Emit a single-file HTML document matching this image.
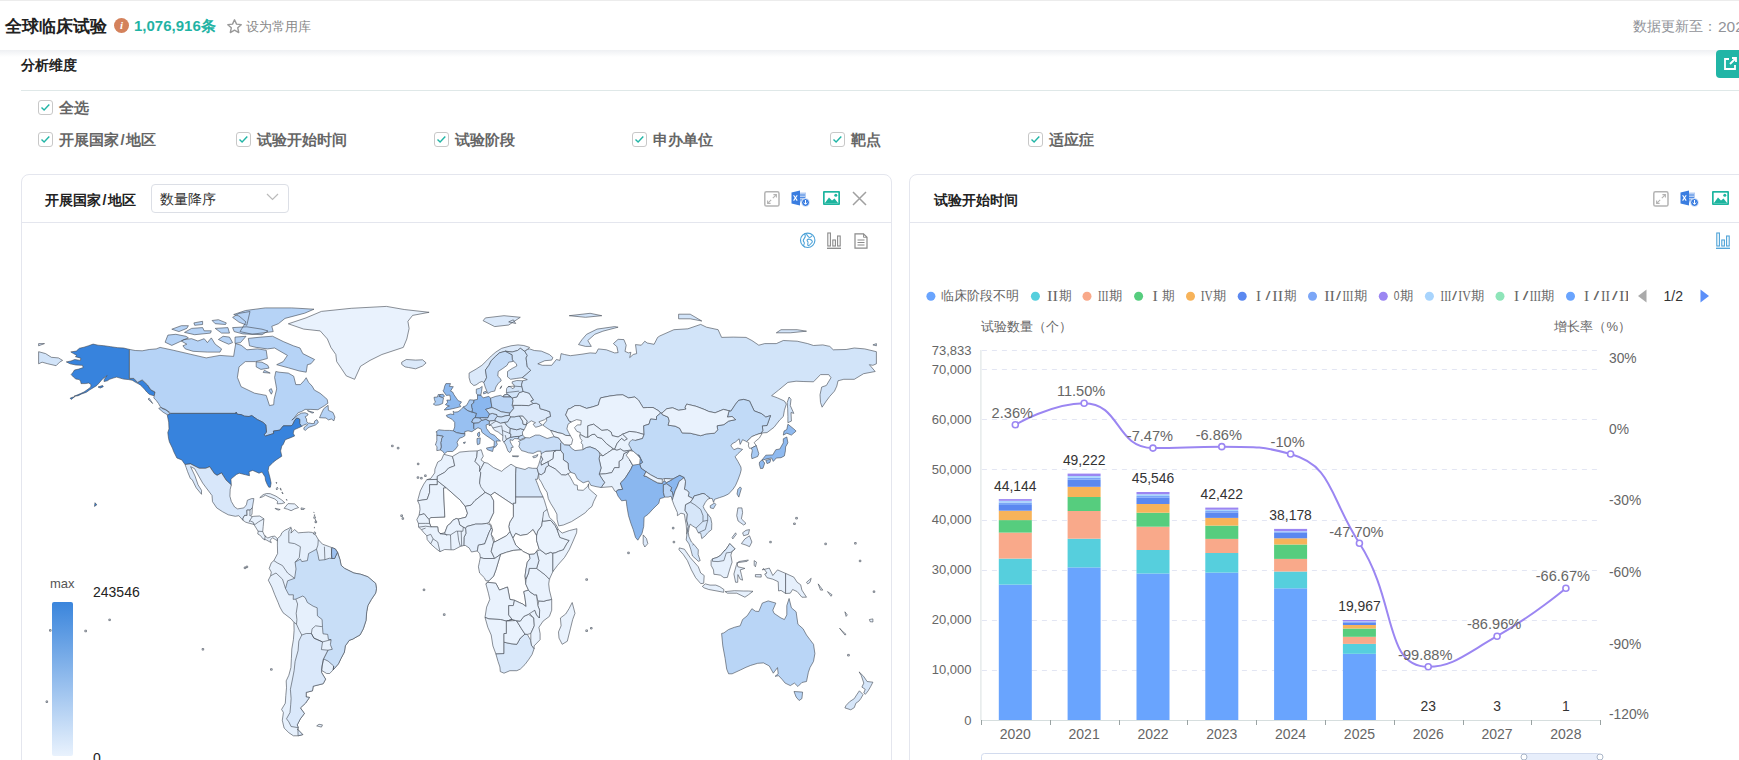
<!DOCTYPE html><html><head><meta charset="utf-8"><style>
*{margin:0;padding:0;box-sizing:border-box}
html,body{width:1739px;height:760px;overflow:hidden;background:#fff;font-family:"Liberation Sans",sans-serif;}
.a{position:absolute;white-space:nowrap}
</style></head><body>
<div class="a" style="left:0;top:0;width:1739px;height:1px;background:#ececec"></div>
<div class="a" style="left:0;top:50px;width:1739px;height:7px;background:linear-gradient(#eef0f3,#fff)"></div>
<div class="a" style="left:5px;top:14px;font-size:17.4px;font-weight:bold;color:#222;line-height:24px">全球临床试验</div>
<div class="a" style="left:114px;top:18px;width:15px;height:15px;border-radius:50%;background:#d4825c;color:#fff;font-size:11px;font-weight:bold;font-style:italic;text-align:center;line-height:15px;font-family:'Liberation Serif',serif">i</div>
<div class="a" style="left:134px;top:16px;font-size:15px;font-weight:bold;color:#1fb3a4;line-height:20px">1,076,916条</div>
<svg class="a" style="left:226px;top:18px" width="17" height="17" viewBox="0 0 24 24"><path d="M12 2.5l2.9 6.2 6.6.7-4.9 4.5 1.4 6.6L12 17.2l-5.9 3.3 1.4-6.6L2.6 9.4l6.6-.7z" fill="none" stroke="#999" stroke-width="2" stroke-linejoin="round"/></svg>
<div class="a" style="left:246px;top:18px;font-size:13px;color:#888;line-height:18px">设为常用库</div>
<div class="a" style="left:1633px;top:18px;font-size:13.8px;color:#919399;line-height:18px">数据更新至：</div>
<div class="a" style="left:1718px;top:17px;font-size:15.5px;color:#919399;line-height:20px">2024-01-01</div>
<div class="a" style="left:21px;top:55px;font-size:14px;font-weight:bold;color:#222;line-height:20px">分析维度</div>
<div class="a" style="left:1716px;top:50px;width:40px;height:28px;border-radius:4px;background:#21b5a6"></div>
<svg class="a" style="left:1721px;top:55px" width="18" height="18" viewBox="0 0 18 18"><path d="M8 4H4v10h10v-4" fill="none" stroke="#fff" stroke-width="1.8"/><path d="M9 9l6-6M11 3h4v4" fill="none" stroke="#fff" stroke-width="1.8"/></svg>
<div class="a" style="left:21px;top:90px;width:1718px;height:1px;background:#dfe8e8"></div>
<div class="a" style="left:38px;top:100px;width:15px;height:15px;border:1px solid #c8c8c8;border-radius:3px;background:#fff"></div>
<svg class="a" style="left:38px;top:100px" width="15" height="15" viewBox="0 0 15 15"><path d="M3.5 7.5l2.6 2.6 5.2-5.6" fill="none" stroke="#21b5a6" stroke-width="1.4"/></svg>
<div class="a" style="left:59px;top:97px;font-size:15px;color:#666;line-height:21px;font-weight:bold">全选</div>
<div class="a" style="left:38px;top:132px;width:15px;height:15px;border:1px solid #c8c8c8;border-radius:3px;background:#fff"></div>
<svg class="a" style="left:38px;top:132px" width="15" height="15" viewBox="0 0 15 15"><path d="M3.5 7.5l2.6 2.6 5.2-5.6" fill="none" stroke="#21b5a6" stroke-width="1.4"/></svg>
<div class="a" style="left:59px;top:129px;font-size:15px;color:#666;line-height:21px;font-weight:bold">开展国家<span style="margin:0 1.6px">/</span>地区</div>
<div class="a" style="left:236px;top:132px;width:15px;height:15px;border:1px solid #c8c8c8;border-radius:3px;background:#fff"></div>
<svg class="a" style="left:236px;top:132px" width="15" height="15" viewBox="0 0 15 15"><path d="M3.5 7.5l2.6 2.6 5.2-5.6" fill="none" stroke="#21b5a6" stroke-width="1.4"/></svg>
<div class="a" style="left:257px;top:129px;font-size:15px;color:#666;line-height:21px;font-weight:bold">试验开始时间</div>
<div class="a" style="left:434px;top:132px;width:15px;height:15px;border:1px solid #c8c8c8;border-radius:3px;background:#fff"></div>
<svg class="a" style="left:434px;top:132px" width="15" height="15" viewBox="0 0 15 15"><path d="M3.5 7.5l2.6 2.6 5.2-5.6" fill="none" stroke="#21b5a6" stroke-width="1.4"/></svg>
<div class="a" style="left:455px;top:129px;font-size:15px;color:#666;line-height:21px;font-weight:bold">试验阶段</div>
<div class="a" style="left:632px;top:132px;width:15px;height:15px;border:1px solid #c8c8c8;border-radius:3px;background:#fff"></div>
<svg class="a" style="left:632px;top:132px" width="15" height="15" viewBox="0 0 15 15"><path d="M3.5 7.5l2.6 2.6 5.2-5.6" fill="none" stroke="#21b5a6" stroke-width="1.4"/></svg>
<div class="a" style="left:653px;top:129px;font-size:15px;color:#666;line-height:21px;font-weight:bold">申办单位</div>
<div class="a" style="left:830px;top:132px;width:15px;height:15px;border:1px solid #c8c8c8;border-radius:3px;background:#fff"></div>
<svg class="a" style="left:830px;top:132px" width="15" height="15" viewBox="0 0 15 15"><path d="M3.5 7.5l2.6 2.6 5.2-5.6" fill="none" stroke="#21b5a6" stroke-width="1.4"/></svg>
<div class="a" style="left:851px;top:129px;font-size:15px;color:#666;line-height:21px;font-weight:bold">靶点</div>
<div class="a" style="left:1028px;top:132px;width:15px;height:15px;border:1px solid #c8c8c8;border-radius:3px;background:#fff"></div>
<svg class="a" style="left:1028px;top:132px" width="15" height="15" viewBox="0 0 15 15"><path d="M3.5 7.5l2.6 2.6 5.2-5.6" fill="none" stroke="#21b5a6" stroke-width="1.4"/></svg>
<div class="a" style="left:1049px;top:129px;font-size:15px;color:#666;line-height:21px;font-weight:bold">适应症</div>
<div class="a" style="left:21px;top:174px;width:871px;height:600px;border:1px solid #e4e6ee;border-radius:8px"></div>
<div class="a" style="left:22px;top:222px;width:869px;height:1px;background:#e4e6ee"></div>
<div class="a" style="left:909px;top:174px;width:900px;height:600px;border:1px solid #e4e6ee;border-radius:8px"></div>
<div class="a" style="left:910px;top:222px;width:829px;height:1px;background:#e4e6ee"></div>
<div class="a" style="left:45px;top:190px;font-size:14px;font-weight:bold;color:#222;line-height:20px">开展国家<span style="margin:0 1.6px">/</span>地区</div>
<div class="a" style="left:934px;top:190px;font-size:14px;font-weight:bold;color:#222;line-height:20px">试验开始时间</div>
<div class="a" style="left:151px;top:184px;width:138px;height:29px;border:1px solid #dcdfe6;border-radius:4px"></div>
<div class="a" style="left:160px;top:189px;font-size:14px;color:#333;line-height:20px">数量降序</div>
<svg class="a" style="left:266px;top:193px" width="13" height="8" viewBox="0 0 13 8"><path d="M1 1l5.5 5.5L12 1" fill="none" stroke="#bbb" stroke-width="1.2"/></svg>
<svg class="a" style="left:764px;top:191px" width="16" height="16" viewBox="0 0 16 16"><rect x="0.8" y="0.8" width="14.2" height="14.2" rx="1.6" fill="none" stroke="#b4b4b4" stroke-width="1.5"/><path d="M8.8 7.2L12.2 3.8M9.4 3.6h3v3M7.2 8.8L3.8 12.2M3.6 9.4v3h3" fill="none" stroke="#b4b4b4" stroke-width="1.1"/></svg>
<svg class="a" style="left:791px;top:190px" width="19" height="17" viewBox="0 0 19 17"><rect x="8" y="2.5" width="7" height="10" fill="#b5cdf3"/><path d="M9 5h5M9 7.5h5M9 10h5" stroke="#3a7de0" stroke-width="0.8"/><path d="M0.5 2.5L9 0.5v15L0.5 13.5z" fill="#3a7de0"/><path d="M2.6 5.2l3.6 5.4M6.2 5.2l-3.6 5.4" stroke="#fff" stroke-width="1.1"/><circle cx="14.5" cy="12.5" r="4" fill="#3a7de0" stroke="#fff" stroke-width="0.8"/><path d="M14.5 10v4.2M12.8 12.6l1.7 1.7 1.7-1.7" stroke="#fff" stroke-width="1" fill="none"/></svg>
<svg class="a" style="left:823px;top:191px" width="17" height="15" viewBox="0 0 17 15"><rect x="0" y="0" width="17" height="14" rx="1" fill="#1db59f"/><rect x="1.7" y="1.7" width="13.6" height="10.6" fill="#fff"/><path d="M1.7 12.3L6 6.5l3 3 2.5-2 3.8 4.8z" fill="#1db59f"/><circle cx="12.8" cy="4.3" r="1.5" fill="#1db59f"/></svg>
<svg class="a" style="left:852px;top:191px" width="15" height="15" viewBox="0 0 15 15"><path d="M1 1l13 13M14 1L1 14" stroke="#a0a0a0" stroke-width="1.5"/></svg>
<svg class="a" style="left:1653px;top:191px" width="16" height="16" viewBox="0 0 16 16"><rect x="0.8" y="0.8" width="14.2" height="14.2" rx="1.6" fill="none" stroke="#b4b4b4" stroke-width="1.5"/><path d="M8.8 7.2L12.2 3.8M9.4 3.6h3v3M7.2 8.8L3.8 12.2M3.6 9.4v3h3" fill="none" stroke="#b4b4b4" stroke-width="1.1"/></svg>
<svg class="a" style="left:1680px;top:190px" width="19" height="17" viewBox="0 0 19 17"><rect x="8" y="2.5" width="7" height="10" fill="#b5cdf3"/><path d="M9 5h5M9 7.5h5M9 10h5" stroke="#3a7de0" stroke-width="0.8"/><path d="M0.5 2.5L9 0.5v15L0.5 13.5z" fill="#3a7de0"/><path d="M2.6 5.2l3.6 5.4M6.2 5.2l-3.6 5.4" stroke="#fff" stroke-width="1.1"/><circle cx="14.5" cy="12.5" r="4" fill="#3a7de0" stroke="#fff" stroke-width="0.8"/><path d="M14.5 10v4.2M12.8 12.6l1.7 1.7 1.7-1.7" stroke="#fff" stroke-width="1" fill="none"/></svg>
<svg class="a" style="left:1712px;top:191px" width="17" height="15" viewBox="0 0 17 15"><rect x="0" y="0" width="17" height="14" rx="1" fill="#1db59f"/><rect x="1.7" y="1.7" width="13.6" height="10.6" fill="#fff"/><path d="M1.7 12.3L6 6.5l3 3 2.5-2 3.8 4.8z" fill="#1db59f"/><circle cx="12.8" cy="4.3" r="1.5" fill="#1db59f"/></svg>
<svg class="a" style="left:799px;top:232px" width="18" height="18" viewBox="0 0 18 18"><circle cx="8.7" cy="8.3" r="7.2" fill="none" stroke="#4ea3d8" stroke-width="1.15"/><path d="M5.5 1.5C6.5 3 6.6 4.8 5.3 6.3S3.6 8.8 5 10.2S4.2 12.8 4.6 13.6L5.6 15.2M7.1 1.2C7.8 2.8 8.6 4.2 9.8 5.2S12 4.6 13.2 3.6M8.06 8.0C8.8 7.2 9.8 7 10.6 7.2S12.8 8 13.3 9.2S12.4 11 11.8 11.8S10.2 13.6 9.5 13.6S8.6 12.6 8.8 11.8S9.2 10.2 8.9 9.8S8 8.8 8.06 8.0z" fill="none" stroke="#4ea3d8" stroke-width="1.05"/></svg>
<svg class="a" style="left:826px;top:232px" width="16" height="17" viewBox="0 0 16 17"><path d="M1 16.3h14" stroke="#8a8a8a" stroke-width="1.3"/><rect x="1.8" y="1" width="2.6" height="13" fill="none" stroke="#8a8a8a" stroke-width="1.1"/><rect x="6.8" y="8" width="2.6" height="6" fill="none" stroke="#8a8a8a" stroke-width="1.1"/><rect x="11.6" y="4" width="2.6" height="10" fill="none" stroke="#8a8a8a" stroke-width="1.1"/></svg>
<svg class="a" style="left:1715px;top:232px" width="16" height="17" viewBox="0 0 16 17"><path d="M1 16.3h14" stroke="#4ea3d8" stroke-width="1.3"/><rect x="1.8" y="1" width="2.6" height="13" fill="none" stroke="#4ea3d8" stroke-width="1.1"/><rect x="6.8" y="8" width="2.6" height="6" fill="none" stroke="#4ea3d8" stroke-width="1.1"/><rect x="11.6" y="4" width="2.6" height="10" fill="none" stroke="#4ea3d8" stroke-width="1.1"/></svg>
<svg class="a" style="left:854px;top:233px" width="14" height="16" viewBox="0 0 14 16"><path d="M1 .8h8.5L13 4.3v10.9H1z" fill="none" stroke="#8a8a8a" stroke-width="1.2"/><path d="M9.5 .8v3.5H13" fill="none" stroke="#8a8a8a" stroke-width="0.9"/><path d="M3.5 7h7M3.5 9.5h7M3.5 12h7" stroke="#8a8a8a" stroke-width="1.1"/></svg>
<svg class="a" style="left:0;top:0;pointer-events:none" width="1739" height="760" viewBox="0 0 1739 760">
<g stroke="#444a55" stroke-width="0.62" stroke-linejoin="round">
<path d="M443.8 454.3 L452.4 456.5 L453.5 459.9 L454.7 465.8 L448.7 468.0 L444.7 472.3 L437.3 476.3 L437.3 479.4 L426.8 479.7 L430.7 478.5 L434.7 472.9 L434.9 469.2 L437.7 462.1 L441.4 459.9Z" fill="#e9f2fd"/>
<path d="M437.3 479.4 L437.3 484.7 L429.6 484.7 L429.6 492.4 L427.2 499.3 L417.7 500.8 L418.2 498.6 L420.3 490.9 L423.8 484.1 L426.8 479.7Z" fill="#e9f2fd"/>
<path d="M417.7 500.8 L427.2 499.3 L429.6 492.4 L429.6 484.7 L437.3 484.7 L437.3 480.7 L446.3 487.8 L443.5 488.1 L444.7 514.1 L444.9 517.2 L430.7 517.6 L429.1 519.7 L424.2 513.8 L419.1 515.1 L420.0 509.5 L419.6 505.2Z" fill="#e9f2fd"/>
<path d="M429.1 519.7 L430.7 517.6 L444.9 517.2 L444.7 514.1 L443.5 488.1 L446.3 487.8 L460.3 500.2 L465.2 506.4 L467.5 513.2 L465.9 517.2 L458.2 519.1 L456.3 518.5 L452.8 520.3 L450.5 523.4 L447.5 525.6 L444.7 533.1 L440.0 533.7 L438.2 531.2 L437.7 526.9 L431.0 526.9 L429.6 523.4Z" fill="#ffffff"/>
<path d="M452.4 456.5 L459.8 452.1 L469.1 451.2 L477.3 450.9 L476.8 456.8 L475.0 461.4 L479.6 466.1 L480.8 472.3 L479.6 483.1 L485.2 492.4 L475.0 500.5 L471.0 505.2 L465.2 506.4 L460.3 500.2 L446.3 487.8 L437.3 480.7 L437.3 476.3 L444.7 472.3 L448.7 468.0 L454.7 465.8 L453.5 459.9Z" fill="#e9f2fd"/>
<path d="M477.3 450.9 L481.2 449.7 L483.3 456.2 L481.0 459.9 L484.3 462.4 L481.5 467.6 L479.6 471.4 L479.6 466.1 L475.0 461.4 L476.8 456.8Z" fill="#e9f2fd"/>
<path d="M484.3 462.4 L487.8 463.3 L493.6 467.6 L501.7 471.4 L504.0 469.2 L511.0 464.2 L516.1 467.3 L515.7 473.8 L515.7 497.1 L515.7 503.3 L513.3 503.3 L513.3 504.8 L494.7 492.4 L490.5 495.2 L485.2 492.4 L480.8 486.9 L479.6 483.1 L480.8 472.3 L479.6 471.4 L481.5 467.6Z" fill="#e9f2fd"/>
<path d="M516.1 467.3 L525.0 469.5 L528.5 467.6 L532.7 468.3 L537.1 468.3 L538.7 473.8 L537.3 479.4 L535.5 479.1 L537.8 484.7 L540.1 490.9 L543.1 497.1 L515.7 497.1 L515.7 473.8Z" fill="#d6e6f9"/>
<path d="M515.7 497.1 L543.1 497.1 L544.3 500.2 L547.1 509.5 L544.8 512.6 L542.4 521.0 L541.7 525.9 L537.8 531.2 L536.6 535.8 L533.1 529.6 L527.3 534.3 L520.3 535.5 L515.7 533.4 L512.9 538.3 L509.9 531.8 L508.7 526.5 L509.9 521.9 L513.3 516.6 L513.3 504.8 L513.3 503.3 L515.7 503.3Z" fill="#e9f2fd"/>
<path d="M536.6 535.8 L536.6 540.5 L538.9 548.2 L536.6 551.3 L534.3 554.1 L529.2 554.4 L522.7 551.3 L520.3 549.2 L515.7 545.1 L512.9 538.3 L515.7 533.4 L520.3 535.5 L527.3 534.3 L533.1 529.6Z" fill="#ffffff"/>
<path d="M490.5 495.2 L494.7 492.4 L513.3 504.8 L513.3 516.6 L509.9 521.9 L508.7 526.5 L509.9 531.8 L506.4 535.8 L500.5 538.9 L494.7 542.0 L493.6 538.0 L491.2 534.3 L492.4 529.6 L491.2 525.0 L488.9 522.5 L493.6 512.6 L493.6 500.8Z" fill="#ffffff"/>
<path d="M465.9 517.2 L467.5 513.2 L465.2 506.4 L471.0 505.2 L475.0 500.5 L485.2 492.4 L490.5 495.2 L493.6 500.8 L493.6 512.6 L488.9 522.5 L486.6 523.4 L481.9 524.1 L475.7 524.1 L466.8 526.5 L465.6 528.4 L463.3 527.2 L459.8 525.0 L458.2 519.1Z" fill="#e9f2fd"/>
<path d="M463.8 545.5 L465.4 545.5 L469.1 547.9 L471.5 552.0 L475.0 551.3 L477.3 551.0 L478.4 545.1 L484.7 543.9 L486.6 538.9 L488.9 532.8 L491.2 528.1 L490.1 524.7 L486.6 523.4 L481.9 524.1 L475.7 524.1 L466.8 526.5 L465.6 528.4 L465.9 533.4 L464.0 537.4Z" fill="#e3eefc"/>
<path d="M477.3 551.0 L479.8 553.8 L480.3 557.5 L483.8 558.5 L494.7 558.5 L491.2 551.3 L492.4 546.7 L493.6 542.0 L491.2 534.3 L492.4 529.6 L491.2 528.1 L488.9 532.8 L486.6 538.9 L484.7 543.9 L478.4 545.1Z" fill="#e9f2fd"/>
<path d="M491.2 551.3 L494.7 558.5 L500.5 554.4 L506.4 552.3 L513.3 550.4 L521.5 549.8 L520.3 549.2 L515.7 545.1 L512.9 538.3 L509.9 531.8 L506.4 535.8 L500.5 538.9 L494.7 542.0 L493.6 542.0 L492.4 546.7Z" fill="#e9f2fd"/>
<path d="M485.9 583.9 L487.8 582.3 L495.9 583.3 L499.4 590.1 L507.5 587.0 L509.9 599.4 L514.5 600.3 L519.2 602.5 L522.7 604.0 L526.1 606.5 L525.0 597.8 L523.8 591.6 L528.5 590.1 L525.7 583.9 L525.0 576.1 L526.1 568.4 L527.3 562.2 L530.1 558.5 L529.2 554.4 L522.7 551.3 L521.5 549.8 L513.3 550.4 L506.4 552.3 L500.5 554.4 L498.2 562.2 L495.9 569.9 L493.6 576.1 L488.9 580.8Z" fill="#ffffff"/>
<path d="M480.3 557.5 L479.4 562.2 L478.4 566.8 L479.6 573.0 L484.3 577.7 L485.9 580.8 L488.9 580.8 L493.6 576.1 L495.9 569.9 L498.2 562.2 L500.5 554.4 L494.7 558.5 L483.8 558.5Z" fill="#e9f2fd"/>
<path d="M485.9 583.9 L488.4 593.2 L489.8 599.4 L486.6 607.1 L485.0 617.4 L488.9 618.9 L500.5 619.5 L506.4 621.1 L512.2 619.5 L508.7 614.9 L508.7 605.6 L513.3 605.6 L514.5 600.3 L509.9 599.4 L507.5 587.0 L499.4 590.1 L495.9 583.3 L487.8 582.3Z" fill="#e9f2fd"/>
<path d="M485.0 617.4 L487.8 627.3 L491.2 635.0 L492.9 645.9 L495.9 654.0 L504.0 653.6 L504.0 642.2 L504.0 633.5 L506.4 633.5 L506.4 621.1 L512.2 619.5 L515.7 620.5 L512.2 619.5 L506.4 621.1 L500.5 619.5 L488.9 618.9Z" fill="#e9f2fd"/>
<path d="M495.9 654.0 L498.0 661.4 L499.9 667.0 L500.3 671.6 L504.0 673.2 L509.9 670.7 L516.8 670.7 L520.3 669.1 L525.0 664.5 L528.5 659.8 L532.0 654.6 L534.1 648.7 L531.5 645.3 L530.8 640.6 L527.3 634.4 L525.0 634.1 L520.3 638.1 L516.8 644.3 L511.0 643.7 L504.0 642.2 L504.0 653.6Z" fill="#d9e8fa"/>
<path d="M504.0 642.2 L511.0 643.7 L516.8 644.3 L520.3 638.1 L525.0 634.1 L521.5 628.8 L516.8 621.1 L515.7 620.5 L506.4 621.1 L506.4 633.5 L504.0 633.5Z" fill="#e9f2fd"/>
<path d="M516.8 621.1 L521.5 628.8 L525.0 634.1 L527.3 634.4 L530.8 633.5 L534.3 625.8 L533.8 618.0 L528.5 614.3 L523.8 616.4 L520.3 621.1Z" fill="#e9f2fd"/>
<path d="M530.8 640.6 L531.5 645.3 L534.1 648.7 L534.1 645.9 L540.1 639.7 L540.1 633.5 L538.9 627.3 L543.1 621.1 L549.4 616.4 L551.7 610.2 L551.7 599.4 L547.1 600.3 L543.6 601.3 L538.9 600.9 L537.8 605.6 L539.6 610.2 L539.4 618.0 L536.6 614.9 L534.8 610.2 L528.5 612.4 L533.8 618.0 L534.3 625.8 L530.8 633.5Z" fill="#e9f2fd"/>
<path d="M508.7 605.6 L508.7 614.9 L512.2 619.5 L515.7 620.5 L520.3 621.1 L523.8 616.4 L528.5 614.3 L534.8 610.2 L536.6 614.9 L539.4 618.0 L539.6 610.2 L537.8 605.6 L536.6 594.8 L534.3 594.8 L529.6 591.6 L528.5 590.1 L523.8 591.6 L525.0 597.8 L526.1 606.5 L522.7 604.0 L519.2 602.5 L514.5 600.3 L513.3 605.6Z" fill="#e9f2fd"/>
<path d="M525.7 583.9 L528.5 590.1 L529.6 591.6 L534.3 594.8 L536.6 594.8 L537.8 600.9 L538.9 600.9 L543.6 601.3 L547.1 600.3 L551.7 599.4 L549.4 590.1 L548.7 583.9 L549.4 579.2 L545.2 574.9 L536.6 568.4 L529.2 568.4 L528.5 573.0 L526.1 579.2Z" fill="#e9f2fd"/>
<path d="M536.6 568.4 L545.2 574.9 L549.4 579.2 L552.9 571.5 L552.9 553.2 L550.6 552.3 L545.9 554.1 L540.1 549.8 L536.6 551.3 L538.9 560.6Z" fill="#e9f2fd"/>
<path d="M529.2 568.4 L536.6 568.4 L538.9 560.6 L536.6 551.3 L534.3 554.1 L529.2 554.4 L530.1 558.5 L527.3 562.2 L526.1 568.4 L525.0 576.1 L525.7 579.2 L528.5 573.0Z" fill="#e3eefc"/>
<path d="M536.6 540.5 L536.6 535.8 L537.8 531.2 L541.7 525.9 L542.4 521.0 L544.8 521.0 L550.6 520.3 L555.2 525.6 L557.1 529.6 L559.9 537.4 L569.2 540.5 L566.9 543.6 L563.4 549.8 L558.7 551.3 L555.2 552.9 L552.9 553.2 L550.6 552.3 L545.9 554.1 L540.1 549.8 L538.9 548.2Z" fill="#e9f2fd"/>
<path d="M542.4 521.0 L543.6 512.0 L547.1 509.5 L549.4 517.2 L554.1 521.9 L557.1 526.5 L558.3 529.6 L557.1 529.6 L555.2 525.6 L550.6 520.3 L544.8 521.0Z" fill="#e9f2fd"/>
<path d="M552.9 571.5 L557.6 565.3 L564.5 557.5 L569.2 549.8 L572.7 542.0 L576.6 532.8 L576.9 528.7 L569.2 530.6 L562.2 533.1 L558.3 529.6 L557.1 529.6 L559.9 537.4 L569.2 540.5 L566.9 543.6 L563.4 549.8 L558.7 551.3 L555.2 552.9 L552.9 553.2Z" fill="#e9f2fd"/>
<path d="M419.1 515.1 L424.2 513.8 L429.1 519.7 L429.6 523.4 L431.0 526.9 L437.7 526.9 L438.2 531.2 L440.0 533.7 L444.7 533.1 L447.5 525.6 L450.5 523.4 L452.8 520.3 L456.3 518.5 L458.2 519.1 L459.8 525.0 L463.3 527.2 L465.6 528.4 L465.9 533.4 L464.0 537.4 L463.8 545.5 L460.3 546.4 L454.0 549.8 L450.5 549.8 L444.7 549.5 L440.0 551.7 L435.4 548.2 L430.7 543.9 L427.2 539.6 L426.8 535.8 L423.3 532.1 L421.4 529.6 L418.6 527.2 L418.4 523.4 L416.8 519.7Z" fill="#e9f2fd"/>
<path d="M572.2 602.5 L575.0 613.3 L572.7 619.5 L570.4 628.8 L567.3 641.2 L562.2 644.3 L559.0 638.1 L558.5 631.9 L561.1 625.8 L560.4 618.0 L565.7 614.0 L569.0 608.7Z" fill="#e9f2fd"/>
<path d="M277.4 540.8 L277.4 538.6 L280.6 535.8 L281.8 532.8 L284.8 530.3 L289.5 528.1 L290.7 526.9 L291.8 529.6 L290.9 533.1 L294.6 529.6 L298.3 532.8 L303.9 532.4 L308.6 532.1 L312.1 532.4 L315.6 534.9 L318.3 539.6 L322.5 544.2 L329.5 546.7 L335.3 548.9 L337.7 552.3 L340.0 559.7 L341.1 565.3 L344.6 568.4 L353.9 573.0 L360.9 574.3 L367.9 576.8 L375.6 583.3 L376.5 588.5 L375.6 593.2 L371.4 599.4 L367.9 605.6 L366.7 611.8 L366.0 620.5 L363.3 628.8 L360.0 635.0 L357.0 636.6 L352.8 639.1 L349.3 640.3 L345.3 645.9 L344.4 652.1 L341.1 658.3 L338.4 663.9 L333.2 669.8 L329.7 673.5 L326.7 673.5 L321.6 670.4 L321.6 672.6 L324.2 676.9 L325.6 679.1 L323.2 683.7 L313.2 686.2 L312.5 690.8 L306.2 692.4 L306.2 697.0 L309.5 697.4 L305.5 703.2 L300.4 707.9 L304.4 713.5 L300.4 718.8 L297.2 724.9 L298.3 727.7 L297.9 729.6 L302.8 734.6 L298.1 735.8 L293.4 735.8 L288.8 732.7 L284.1 728.0 L282.3 720.3 L283.4 712.5 L281.6 709.4 L285.3 703.2 L285.8 695.5 L286.5 687.8 L286.2 680.9 L288.8 675.3 L290.9 667.6 L291.4 658.3 L291.8 649.0 L293.4 639.7 L294.1 630.4 L293.9 622.3 L291.1 618.9 L283.0 612.7 L279.9 607.1 L278.1 602.5 L274.8 594.8 L271.8 587.0 L268.3 580.2 L270.6 575.8 L271.3 572.1 L269.2 568.4 L271.3 562.8 L273.9 560.6 L277.6 553.5 L277.4 545.1ZM319.0 724.3 L322.5 724.9 L321.4 727.1 L316.7 725.9Z" fill="#e6f0fc"/>
<path d="M337.4 552.3 L340.0 559.7 L341.1 565.3 L344.6 568.4 L353.9 573.0 L360.9 574.3 L367.9 576.8 L375.6 583.3 L376.5 588.5 L375.6 593.2 L371.4 599.4 L367.9 605.6 L366.7 611.8 L366.0 620.5 L363.3 628.8 L360.0 635.0 L357.0 636.6 L352.8 639.1 L349.3 640.3 L345.3 645.9 L344.4 652.1 L341.1 658.3 L338.4 663.9 L333.2 669.8 L333.7 666.0 L328.1 661.1 L323.5 658.9 L327.9 650.2 L332.3 649.3 L330.4 644.7 L331.1 639.7 L328.4 639.4 L327.7 634.4 L323.0 633.8 L322.5 627.3 L322.1 619.5 L317.4 615.8 L317.2 607.8 L313.2 606.2 L307.4 602.5 L305.3 597.8 L302.8 596.0 L295.8 599.1 L293.2 599.4 L293.4 594.8 L288.8 594.8 L285.5 588.5 L287.6 580.8 L294.6 578.3 L296.0 569.0 L295.1 562.2 L300.4 559.1 L301.8 561.6 L307.4 560.6 L308.6 553.5 L316.5 549.2 L317.9 554.4 L319.0 560.3 L324.9 559.7 L329.5 558.2 L331.8 558.5 L334.6 558.5Z" fill="#c8def7"/>
<path d="M321.6 670.4 L321.6 672.6 L324.2 676.9 L325.6 679.1 L323.2 683.7 L313.2 686.2 L312.5 690.8 L306.2 692.4 L306.2 697.0 L309.5 697.4 L305.5 703.2 L300.4 707.9 L304.4 713.5 L300.4 718.8 L297.2 724.9 L298.3 727.7 L291.1 726.5 L288.8 721.8 L286.5 718.8 L290.0 712.5 L290.7 704.8 L291.1 698.6 L290.4 689.3 L292.3 680.0 L294.1 670.7 L295.1 661.4 L298.1 650.5 L298.8 641.2 L301.8 635.0 L306.2 633.5 L311.4 633.5 L313.9 638.1 L322.5 641.9 L321.4 649.6 L327.9 650.2 L323.5 658.9 L322.1 666.0ZM297.9 729.6 L302.8 734.6 L298.1 735.8 L297.9 728.7Z" fill="#dae8fa"/>
<path d="M331.8 547.6 L335.3 548.9 L337.4 552.3 L334.6 558.5 L331.8 558.5 L331.4 554.4Z" fill="#9dc1f0"/>
<path d="M129.4 349.4 L123.6 348.0 L117.8 347.7 L110.8 346.7 L103.8 345.7 L98.0 345.2 L93.1 344.1 L88.7 345.7 L84.0 347.2 L79.4 348.3 L76.3 351.1 L70.8 351.9 L73.5 353.6 L76.8 355.4 L75.4 356.7 L80.8 358.2 L80.5 360.4 L74.7 359.5 L71.0 361.0 L66.3 361.9 L70.1 363.8 L75.9 365.0 L82.4 365.3 L83.3 367.5 L78.7 369.1 L74.5 370.0 L73.1 372.2 L71.2 374.6 L73.5 377.1 L75.9 379.0 L79.4 379.6 L80.8 381.8 L81.0 383.6 L85.2 383.6 L88.7 383.0 L91.0 384.6 L90.8 387.0 L88.0 389.2 L84.0 392.0 L80.5 393.6 L77.0 395.1 L74.0 396.3 L78.2 395.7 L81.7 393.9 L86.3 392.3 L89.8 389.8 L93.3 387.7 L96.8 385.5 L99.1 383.0 L101.0 380.8 L103.1 378.4 L105.0 377.1 L107.1 375.6 L104.3 379.3 L104.0 381.5 L107.3 380.8 L109.6 379.3 L113.1 378.1 L116.6 377.1 L120.1 378.1 L123.6 379.1 L128.2 379.5 L132.2 380.2 L135.2 382.1 L138.0 383.6 L140.3 384.9 L142.2 386.7 L144.5 389.2 L146.8 392.0 L149.2 394.2 L151.5 395.1 L154.3 395.7 L155.0 392.0 L150.8 389.8 L147.5 384.9 L142.2 379.9 L137.5 382.4 L133.8 378.4 L129.4 378.4ZM70.1 398.2 L72.4 397.3 L74.7 396.7 L71.2 399.4ZM100.3 388.0 L103.3 386.7 L102.6 385.5 L98.0 387.0Z" fill="#3783dd"/>
<path d="M129.4 349.4 L129.4 378.4 L133.8 378.4 L137.5 382.4 L142.2 379.9 L147.5 384.9 L150.8 389.8 L155.0 392.0 L154.3 395.7 L153.8 397.9 L156.2 400.4 L158.5 403.5 L160.1 406.3 L162.0 408.4 L166.6 410.3 L169.0 411.8 L170.8 413.4 L236.1 413.4 L236.1 412.2 L237.4 414.3 L241.1 414.6 L244.6 416.2 L249.0 416.5 L251.8 415.6 L257.4 419.6 L260.6 421.1 L263.0 422.4 L265.8 424.9 L266.5 432.0 L264.1 434.8 L265.5 436.0 L273.7 433.5 L273.4 431.1 L279.9 430.1 L283.0 426.1 L283.7 425.8 L291.1 425.8 L292.7 424.6 L294.6 420.5 L296.5 418.2 L298.6 418.5 L299.7 419.3 L299.7 423.6 L301.6 426.4 L303.5 425.2 L306.7 423.9 L307.6 424.9 L304.4 427.0 L303.7 429.2 L305.3 430.4 L307.9 428.0 L309.7 427.0 L313.2 425.8 L315.6 424.9 L317.9 423.0 L318.3 422.1 L316.9 419.6 L314.6 421.1 L314.4 423.3 L312.1 423.6 L309.0 423.0 L308.1 423.3 L306.7 421.5 L306.5 419.0 L305.1 416.8 L307.4 415.6 L308.1 414.0 L305.1 412.8 L301.6 413.1 L298.1 414.9 L291.8 420.2 L294.6 417.4 L298.1 412.8 L301.6 411.5 L305.1 409.4 L310.9 409.4 L317.9 409.7 L324.6 405.6 L327.9 403.2 L327.2 399.4 L323.7 396.3 L320.0 393.2 L314.4 390.1 L312.1 386.1 L308.6 382.4 L306.2 377.7 L304.2 380.5 L300.4 384.6 L295.8 384.6 L293.7 376.2 L288.3 373.1 L279.0 372.2 L275.8 371.5 L274.6 377.4 L276.7 388.9 L274.1 399.4 L273.7 404.7 L269.5 405.6 L266.2 395.4 L254.6 393.2 L241.1 386.7 L237.4 377.4 L239.0 366.9 L245.3 361.6 L255.7 361.6 L267.4 358.5 L266.2 350.2 L257.4 348.9 L246.9 349.8 L241.1 345.2 L235.7 343.6 L233.6 356.4 L219.9 355.4 L206.2 357.9 L189.0 353.9 L173.1 350.2 L160.1 347.4 L156.2 348.9 L149.2 349.5 L142.2 350.8 L135.2 350.5ZM170.6 415.3 L167.1 414.6 L163.1 412.2 L158.7 408.4 L160.8 407.5 L165.5 409.4 L169.0 412.5ZM165.1 342.2 L167.9 335.1 L175.8 334.3 L186.0 336.3 L188.4 337.9 L181.3 341.0 L171.8 345.4ZM181.3 341.0 L183.7 339.5 L191.6 338.7 L197.9 341.0 L204.2 338.7 L207.4 342.6 L211.3 337.9 L215.2 344.2 L221.6 348.9 L220.0 352.1 L207.4 352.1 L193.1 351.3 L185.3 348.9 L182.9 345.8 L186.8 344.2ZM218.4 339.5 L223.1 336.3 L229.5 337.1 L232.6 342.6 L228.7 344.2 L223.1 341.8ZM235.0 337.1 L246.0 336.3 L240.5 342.6 L235.0 343.4ZM171.8 329.2 L181.3 325.7 L188.4 325.7 L186.8 328.4 L178.9 331.6ZM184.5 332.4 L191.6 328.4 L202.6 327.6 L204.2 330.8 L211.3 330.8 L210.5 333.1 L194.7 334.7ZM193.9 322.9 L202.6 321.3 L202.6 324.5 L194.7 325.3ZM212.1 320.5 L218.4 319.7 L226.3 322.9 L225.5 324.5 L215.2 323.7ZM215.2 328.4 L227.9 327.6 L229.5 333.1 L221.6 333.1ZM232.6 327.6 L246.8 326.8 L262.0 329.2 L268.0 331.0 L262.0 334.7 L242.9 333.9 L234.2 331.6ZM232.6 317.4 L238.9 313.4 L250.0 311.5 L246.8 325.3 L238.9 322.1ZM233.7 314.5 L245.5 310.5 L265.3 307.9 L291.6 307.9 L314.0 309.2 L304.7 313.2 L285.0 318.4 L278.4 323.7 L271.8 326.3 L273.2 331.6 L252.1 334.2 L240.0 331.6 L246.0 322.0 L239.0 316.0ZM248.3 338.4 L260.9 337.1 L272.5 336.2 L283.2 341.5 L293.4 345.8 L300.0 348.0 L302.8 353.6 L314.6 359.5 L310.9 363.8 L307.4 364.7 L306.2 372.2 L299.0 370.9 L288.3 367.8 L276.7 364.7 L283.2 361.6 L287.4 355.4 L274.6 348.0 L267.4 348.9 L256.2 347.4 L249.5 345.8ZM256.2 366.9 L260.9 369.4 L269.0 368.1 L267.8 365.3 L262.0 362.2 L256.2 361.9ZM319.5 417.7 L321.4 413.4 L323.7 408.7 L328.1 405.3 L328.4 410.3 L333.0 412.5 L334.9 417.1 L333.9 420.8 L331.4 419.0 L328.4 419.9 L326.0 418.0ZM312.1 413.1 L307.4 410.6 L313.9 412.5ZM150.3 401.3 L152.7 403.5 L149.2 398.2 L148.0 399.1ZM272.5 391.7 L271.3 394.2 L269.0 390.1 L271.3 388.6ZM263.2 372.5 L270.2 373.1 L264.4 370.3Z" fill="#b6d3f6"/>
<path d="M170.8 413.4 L167.3 415.3 L168.7 422.1 L169.0 428.9 L167.8 432.6 L168.5 438.2 L169.4 441.9 L172.4 448.1 L173.8 451.8 L176.9 458.0 L181.8 459.9 L185.0 464.5 L190.6 463.9 L199.2 468.3 L205.7 468.3 L209.7 466.7 L214.3 473.5 L217.1 475.4 L221.5 472.9 L226.0 480.0 L231.3 485.0 L230.9 479.1 L236.4 474.5 L239.2 473.2 L245.7 474.8 L249.5 475.7 L249.0 471.7 L252.7 470.4 L259.0 473.2 L262.0 472.0 L265.1 476.9 L265.5 480.4 L267.2 484.4 L268.8 487.2 L270.4 487.2 L271.1 483.1 L269.9 477.3 L268.1 470.7 L268.8 466.7 L273.0 462.4 L276.2 459.9 L281.8 456.2 L280.6 450.9 L281.8 445.9 L283.2 444.4 L285.3 439.7 L290.0 437.9 L294.6 436.0 L293.2 433.2 L294.1 429.8 L298.1 428.0 L301.6 426.4 L299.7 423.6 L299.7 419.3 L298.6 418.5 L296.5 418.2 L294.6 420.5 L292.7 424.6 L291.1 425.8 L283.7 425.8 L283.0 426.1 L279.9 430.1 L273.4 431.1 L273.7 433.5 L265.5 436.0 L264.1 434.8 L266.5 432.0 L265.8 424.9 L263.0 422.4 L260.6 421.1 L257.4 419.6 L251.8 415.6 L249.0 416.5 L244.6 416.2 L241.1 414.6 L237.4 414.3 L236.1 412.2 L236.1 413.4ZM94.5 506.4 L96.8 504.8 L95.0 502.7Z" fill="#3783dd"/>
<path d="M185.0 464.5 L186.2 467.6 L187.6 471.7 L190.4 478.5 L192.2 479.7 L196.2 487.8 L201.5 494.3 L201.5 490.3 L198.0 484.7 L195.0 476.0 L190.6 466.7 L194.5 468.6 L199.2 476.9 L202.7 483.1 L206.2 487.8 L212.0 495.5 L212.5 501.7 L216.7 507.9 L222.5 511.7 L228.3 514.8 L235.3 516.3 L238.8 515.7 L243.0 520.3 L243.0 518.2 L244.6 515.4 L247.1 515.4 L246.9 510.1 L250.0 510.1 L252.3 507.9 L253.9 498.6 L251.6 498.6 L247.4 500.2 L246.4 504.8 L243.9 507.9 L237.6 508.9 L234.6 507.0 L231.3 501.4 L229.9 496.2 L230.2 489.3 L231.3 485.0 L226.0 480.0 L221.5 472.9 L217.1 475.4 L214.3 473.5 L209.7 466.7 L205.7 468.3 L199.2 468.3 L190.6 463.9Z" fill="#d8e7fa"/>
<path d="M243.0 520.3 L245.7 522.2 L249.7 523.4 L253.9 524.4 L256.2 528.1 L258.1 531.2 L257.8 534.0 L260.4 535.5 L263.0 538.9 L266.2 539.9 L271.3 542.7 L270.2 540.2 L272.5 537.7 L275.5 539.6 L277.4 540.8 L277.4 538.6 L274.8 536.2 L271.6 536.5 L267.8 538.0 L264.6 535.8 L262.7 531.5 L263.2 526.5 L263.9 518.8 L259.7 516.0 L253.9 516.3 L252.3 516.6 L250.6 516.0 L252.0 514.1 L252.3 507.9 L250.0 510.1 L246.9 510.1 L247.1 515.4 L244.6 515.4 L243.0 518.2Z" fill="#e9f2fd"/>
<path d="M288.3 323.8 L303.7 329.1 L320.2 330.9 L327.4 339.0 L330.9 347.4 L335.8 354.5 L336.7 361.6 L341.6 368.8 L346.3 375.9 L354.6 379.3 L360.5 366.3 L370.0 360.4 L381.9 354.5 L403.3 347.4 L406.8 339.0 L409.1 328.5 L407.9 321.3 L412.6 315.4 L429.1 312.3 L404.2 309.5 L386.5 306.4 L351.2 308.3 L321.4 311.4 L306.0 317.9Z" fill="#e9f2fd"/>
<path d="M259.8 497.6 L263.2 494.6 L266.7 493.5 L270.2 493.7 L276.0 496.2 L281.6 499.9 L284.8 502.7 L281.8 503.6 L277.2 503.8 L277.6 501.4 L274.8 499.0 L269.0 496.8 L265.5 495.2 L262.0 497.1ZM284.1 508.3 L288.1 503.6 L294.6 503.9 L298.6 507.6 L294.6 508.9 L291.1 510.7 L287.6 509.2ZM275.1 508.3 L280.2 509.5 L278.3 510.1 L275.5 508.9ZM301.1 507.9 L304.8 508.6 L303.9 509.5 L301.1 509.5ZM276.0 482.2 L276.9 482.8 L276.5 483.5ZM277.2 487.2 L278.1 488.1 L276.9 490.0 L276.0 489.0ZM280.2 488.4 L281.1 490.3 L280.6 488.1ZM281.8 492.4 L283.0 494.0 L282.3 492.1ZM286.0 499.9 L287.2 500.2 L286.5 499.3ZM313.7 512.3 L314.2 512.6 L313.9 512.0ZM314.2 514.8 L315.1 515.1 L314.4 515.7ZM315.3 519.4 L315.8 520.7 L315.1 520.0ZM315.3 522.2 L315.8 522.8 L315.6 521.6ZM314.9 527.5 L314.2 528.1 L314.4 527.2ZM314.2 531.8 L315.6 532.4 L315.6 534.0 L313.5 534.0Z" fill="#e9f2fd"/>
<path d="M405.1 366.9 L401.7 364.4 L401.7 362.2 L406.3 359.5 L415.6 360.1 L422.6 359.8 L426.1 362.9 L422.6 366.0 L415.6 368.8 L408.6 367.5Z" fill="#dbe9fa"/>
<path d="M444.2 410.0 L449.4 409.4 L455.2 408.1 L460.8 406.6 L459.6 404.7 L461.5 401.9 L458.2 400.7 L456.8 398.8 L454.0 394.8 L452.6 392.0 L450.5 391.1 L452.8 387.4 L453.3 386.7 L449.4 386.4 L450.5 383.6 L445.9 383.6 L444.7 386.1 L444.0 389.2 L443.1 390.8 L444.7 393.2 L446.3 395.4 L449.8 395.1 L450.3 397.6 L450.5 400.1 L446.8 400.1 L447.7 402.2 L445.4 404.7 L449.4 406.0 L447.5 406.6ZM444.5 396.3 L443.1 394.2 L440.5 394.5 L438.9 396.3 L442.4 397.6Z" fill="#8db9ef"/>
<path d="M443.1 400.1 L443.5 397.9 L442.4 397.6 L438.9 396.3 L440.5 394.5 L438.2 394.5 L437.5 397.0 L434.0 397.3 L434.5 399.8 L435.4 402.2 L433.3 404.1 L435.4 405.3 L438.9 405.0 L442.6 403.5Z" fill="#a9cbf3"/>
<path d="M453.3 430.8 L454.7 427.0 L454.7 422.4 L452.1 419.3 L447.0 416.8 L446.3 415.3 L450.5 414.0 L453.8 414.6 L453.1 411.2 L454.7 412.2 L458.0 411.8 L461.2 409.4 L463.3 406.9 L467.3 410.3 L471.0 411.8 L476.6 413.4 L475.2 417.7 L473.3 418.7 L471.7 422.1 L473.8 423.0 L473.8 428.3 L475.0 429.5 L471.9 431.7 L468.0 430.8 L464.7 431.7 L464.9 433.9 L461.0 433.5 L456.3 432.6ZM479.4 432.0 L479.8 434.8 L478.9 437.0 L477.5 435.4 L477.7 433.2Z" fill="#98c0f1"/>
<path d="M464.9 433.9 L464.9 435.7 L462.4 437.3 L459.6 438.2 L457.0 442.2 L458.0 445.3 L455.9 448.7 L452.6 451.5 L447.3 451.5 L444.5 453.7 L442.6 451.2 L440.3 450.0 L441.2 446.9 L440.7 442.5 L441.4 440.7 L441.7 438.2 L443.1 436.3 L438.4 435.4 L436.8 435.4 L436.8 432.3 L435.9 432.0 L438.9 429.8 L444.7 430.4 L449.4 430.4 L453.3 430.8 L456.3 432.6 L461.0 433.5ZM463.1 442.8 L465.4 441.9 L464.7 443.5Z" fill="#a4c7f2"/>
<path d="M440.3 450.0 L436.8 450.6 L437.0 446.6 L435.4 445.0 L436.8 440.7 L436.8 435.4 L438.4 435.4 L443.1 436.3 L441.7 438.2 L441.4 440.7 L440.7 442.5 L441.2 446.9Z" fill="#c3daf7"/>
<path d="M475.0 429.5 L478.0 427.7 L481.2 429.2 L481.9 432.3 L485.9 435.4 L490.1 438.2 L494.3 441.3 L494.0 446.9 L495.0 447.5 L497.3 444.4 L496.1 441.0 L500.5 441.0 L497.1 438.2 L494.7 435.4 L490.3 433.5 L486.4 428.3 L486.1 424.9 L489.4 423.9 L489.4 421.1 L485.9 419.3 L481.9 420.2 L478.4 422.7 L473.8 423.0 L473.8 428.3ZM486.4 448.1 L493.8 446.6 L492.6 451.5 L487.3 449.7ZM477.0 438.5 L480.3 437.9 L479.8 443.8 L477.5 444.7 L477.0 442.2Z" fill="#a2c6f2"/>
<path d="M471.5 404.4 L471.7 407.5 L472.4 409.4 L471.9 411.8 L476.6 413.4 L475.2 417.7 L479.8 418.0 L481.9 417.7 L487.8 418.0 L489.6 414.0 L485.7 409.4 L491.9 407.5 L490.8 400.1 L490.5 398.2 L488.9 396.3 L483.1 397.9 L480.8 395.1 L477.5 394.8 L477.5 399.4 L473.8 400.1 L473.6 402.9Z" fill="#8ab7ef"/>
<path d="M463.3 406.9 L466.3 405.6 L468.2 402.5 L469.6 399.8 L473.8 400.1 L473.6 402.9 L471.5 404.4 L471.7 407.5 L472.4 409.4 L471.9 411.8 L471.0 411.8 L467.3 410.3Z" fill="#a6c9f3"/>
<path d="M471.7 422.1 L473.3 418.7 L475.2 417.7 L479.8 418.0 L481.9 420.2 L478.4 422.7 L473.8 423.0Z" fill="#b3d0f5"/>
<path d="M479.8 418.0 L481.9 417.7 L487.8 418.0 L489.6 414.0 L492.4 413.4 L496.8 414.6 L497.3 416.5 L495.9 418.0 L494.7 420.5 L489.4 421.1 L485.9 419.3 L481.9 420.2Z" fill="#c3daf7"/>
<path d="M477.5 394.8 L480.8 395.1 L481.5 391.7 L482.2 386.4 L479.6 388.3 L476.3 389.2 L476.3 393.2ZM483.6 393.9 L486.6 392.9 L486.1 391.4 L483.6 392.0Z" fill="#b9d5f6"/>
<path d="M473.8 385.5 L470.5 382.7 L469.1 377.7 L469.1 373.1 L476.1 369.1 L481.9 365.3 L486.6 360.7 L491.2 356.0 L495.9 352.0 L501.7 348.3 L511.0 345.8 L518.0 344.9 L523.8 345.5 L529.6 347.4 L527.3 349.5 L524.8 351.4 L520.3 348.3 L517.5 350.5 L512.2 352.0 L505.4 351.2 L499.4 352.9 L495.9 356.0 L491.2 360.7 L488.9 365.3 L485.4 370.0 L486.1 374.0 L486.6 377.7 L485.0 380.8 L483.8 382.4 L481.9 381.5 L479.6 382.4 L476.1 384.9ZM483.1 320.7 L494.7 326.6 L508.7 325.0 L520.3 317.3 L504.0 315.7 L485.4 317.9ZM508.7 321.9 L515.7 323.5 L513.3 319.8Z" fill="#dbe9fa"/>
<path d="M483.8 382.4 L485.0 380.8 L486.6 377.7 L486.1 374.0 L485.4 370.0 L488.9 365.3 L491.2 360.7 L495.9 356.0 L499.4 352.9 L505.4 351.2 L512.2 354.8 L512.4 359.5 L513.6 361.3 L508.7 362.2 L507.1 365.3 L502.9 368.4 L498.2 371.5 L497.8 376.2 L500.5 378.7 L501.2 380.8 L498.2 383.3 L495.9 387.0 L494.7 391.1 L491.2 391.7 L487.8 393.6 L486.8 391.1 L485.2 387.0ZM499.9 388.6 L501.7 385.8 L501.0 388.0Z" fill="#c4dbf7"/>
<path d="M513.6 361.3 L516.4 363.8 L516.8 366.0 L512.2 368.4 L507.5 371.5 L507.5 376.8 L510.6 379.3 L516.8 378.4 L522.2 377.7 L526.1 374.6 L530.8 370.3 L527.3 366.9 L526.6 362.2 L526.1 357.9 L527.3 355.4 L524.8 351.4 L520.3 348.3 L517.5 350.5 L512.2 352.0 L505.4 351.2 L512.2 354.8 L512.4 359.5Z" fill="#d2e4f9"/>
<path d="M490.8 400.1 L491.9 407.5 L495.9 409.1 L501.2 411.8 L509.9 413.1 L513.6 408.7 L512.2 405.3 L513.1 400.7 L512.2 397.9 L510.6 396.7 L502.9 396.7 L500.5 395.4 L495.9 396.3 L490.5 398.2Z" fill="#bcd6f6"/>
<path d="M485.7 409.4 L491.9 407.5 L495.9 409.1 L501.2 411.8 L509.9 413.1 L509.2 415.3 L505.2 415.9 L501.2 417.1 L497.3 416.5 L496.8 414.6 L492.4 413.4 L489.6 414.0Z" fill="#cfe2f8"/>
<path d="M497.3 416.5 L501.2 417.1 L505.2 415.9 L509.2 415.3 L510.8 416.8 L507.5 422.1 L504.5 422.4 L500.5 423.3 L495.9 421.1 L494.7 420.5 L495.9 418.0Z" fill="#d2e4f9"/>
<path d="M489.4 423.9 L489.1 425.5 L491.2 425.2 L492.9 428.0 L494.7 430.4 L498.2 432.0 L500.5 433.9 L502.9 435.7 L502.6 440.4 L504.0 442.2 L506.4 439.4 L510.6 437.3 L511.0 434.2 L509.9 433.5 L510.3 428.3 L507.5 426.4 L504.5 422.4 L500.5 423.3 L495.9 421.1 L494.7 420.5 L489.4 421.1Z" fill="#e3eefc"/>
<path d="M504.0 442.2 L505.7 445.0 L506.8 448.1 L508.0 451.2 L509.9 452.5 L511.5 450.0 L511.0 447.8 L513.3 447.2 L511.5 444.4 L510.3 441.9 L510.1 439.7 L512.9 440.4 L514.5 438.5 L518.0 438.8 L519.4 436.3 L514.5 436.6 L510.6 437.3 L506.4 439.4ZM512.2 455.9 L518.7 455.9 L518.0 456.8 L512.9 456.5Z" fill="#cadff8"/>
<path d="M510.6 437.3 L514.5 436.6 L519.4 436.3 L522.7 435.1 L522.4 432.0 L524.1 429.8 L520.3 428.6 L516.8 429.8 L510.3 428.3 L509.9 433.5 L511.0 434.2Z" fill="#d6e6f9"/>
<path d="M510.3 428.3 L516.8 429.8 L520.3 428.6 L524.1 429.8 L526.4 425.2 L523.1 424.2 L522.7 421.1 L519.4 415.9 L514.5 416.8 L510.8 416.8 L507.5 422.1 L504.5 422.4 L507.5 426.4Z" fill="#d2e4f9"/>
<path d="M519.4 415.9 L522.7 421.1 L523.1 424.2 L526.4 424.6 L527.3 421.1 L522.7 415.9Z" fill="#e9f2fd"/>
<path d="M509.2 415.3 L510.8 416.8 L514.5 416.8 L519.4 415.9 L522.7 415.9 L527.3 421.1 L526.4 424.6 L528.5 422.7 L531.3 420.8 L535.5 422.7 L533.1 424.2 L535.5 427.3 L538.9 426.4 L542.4 424.9 L540.1 423.3 L538.9 421.8 L544.8 419.6 L546.6 418.0 L550.6 416.5 L549.9 411.8 L545.9 410.3 L540.1 408.7 L539.4 404.7 L536.2 403.2 L533.1 403.5 L528.5 405.6 L521.5 405.3 L513.6 405.3 L513.6 408.7 L509.9 413.1Z" fill="#dce9fa"/>
<path d="M512.2 405.3 L513.6 405.3 L521.5 405.3 L528.5 405.6 L533.1 403.5 L530.8 401.0 L533.6 400.1 L529.2 393.2 L523.1 391.4 L519.2 392.6 L516.8 397.0 L512.2 397.9 L513.1 400.7Z" fill="#e3eefc"/>
<path d="M506.4 392.6 L506.6 388.6 L508.0 386.7 L510.1 386.4 L512.2 388.6 L514.3 387.7 L514.0 384.6 L512.2 383.6 L512.2 381.8 L516.8 380.5 L522.7 380.8 L521.5 384.9 L523.1 391.4 L519.2 392.6 L516.8 397.0 L512.2 397.9 L510.6 396.7 L507.1 394.2ZM503.1 396.7 L510.6 396.7 L507.1 394.2 L504.0 395.1Z" fill="#d2e4f9"/>
<path d="M529.6 348.9 L534.3 350.5 L541.3 351.1 L549.4 354.5 L552.9 357.6 L551.7 360.1 L544.8 360.7 L537.8 363.8 L542.4 365.3 L545.9 365.3 L551.7 365.3 L556.4 359.5 L559.9 360.4 L561.1 353.6 L564.5 354.5 L570.4 355.7 L582.0 354.2 L590.1 352.9 L596.0 353.3 L598.3 348.9 L606.4 349.8 L614.6 352.9 L618.1 352.6 L616.9 346.7 L613.4 343.6 L618.1 339.3 L623.9 339.6 L626.2 345.2 L625.0 351.4 L628.5 352.9 L630.9 352.3 L629.7 357.6 L633.2 354.5 L636.7 353.6 L635.5 344.6 L641.3 345.2 L644.8 341.2 L647.2 343.0 L654.1 344.3 L657.6 337.4 L659.9 335.9 L673.9 329.7 L687.9 328.8 L700.7 324.4 L706.5 327.2 L718.1 329.7 L721.6 337.4 L733.2 337.1 L746.0 337.4 L751.9 340.5 L758.8 345.2 L764.7 343.6 L776.3 343.6 L783.3 340.5 L797.2 341.2 L807.7 343.6 L813.5 345.5 L822.8 344.9 L829.8 346.4 L833.3 349.8 L846.1 349.5 L854.3 348.0 L864.7 348.9 L876.4 351.7 L876.4 363.8 L872.9 365.3 L869.4 364.7 L875.2 371.5 L863.6 373.7 L854.3 379.3 L843.8 379.3 L838.0 380.8 L836.8 386.1 L834.5 391.1 L829.8 396.3 L826.3 401.0 L822.1 407.2 L820.5 402.5 L820.0 394.8 L821.7 387.0 L826.3 385.5 L831.0 377.7 L828.7 374.6 L820.5 374.6 L813.5 381.8 L803.1 381.5 L796.1 381.2 L787.9 382.4 L778.6 390.1 L771.6 395.7 L777.5 397.9 L784.4 401.0 L786.3 404.1 L784.4 410.3 L783.3 416.5 L779.8 419.9 L774.0 427.3 L767.0 432.6 L762.3 432.9 L761.6 434.2 L761.2 433.2 L762.8 430.4 L762.3 425.8 L767.0 425.5 L770.5 415.6 L765.8 417.1 L761.6 413.7 L754.2 410.9 L749.5 401.0 L743.7 399.4 L738.6 400.4 L735.6 404.1 L730.9 411.2 L729.1 410.8 L723.5 409.4 L715.1 412.8 L708.8 411.5 L704.2 409.4 L696.0 406.3 L686.7 404.1 L685.1 407.2 L686.0 409.1 L678.6 410.3 L672.7 407.8 L666.9 408.7 L661.8 413.1 L660.6 413.1 L658.8 410.9 L653.0 407.5 L647.2 407.5 L643.2 407.8 L638.5 400.1 L634.8 397.0 L628.5 397.9 L622.7 394.8 L616.9 395.1 L609.9 396.0 L600.6 397.9 L599.4 401.0 L598.3 405.0 L592.5 406.9 L586.6 408.4 L579.7 405.6 L575.0 405.6 L570.4 408.4 L568.0 409.1 L565.7 414.9 L567.1 417.1 L569.2 421.1 L571.5 421.8 L568.0 424.2 L566.9 428.9 L568.7 432.6 L570.4 435.7 L565.7 435.4 L562.2 433.5 L558.7 432.9 L550.6 430.4 L545.9 427.3 L542.9 425.2 L546.6 420.8 L546.6 418.0 L550.6 416.5 L549.9 411.8 L545.9 410.3 L540.1 408.7 L539.4 404.7 L536.2 403.2 L533.1 403.5 L530.8 401.0 L533.6 400.1 L529.2 393.2 L523.1 391.4 L521.5 384.9 L522.7 380.8 L527.3 379.6 L525.0 378.7 L522.2 377.7 L526.1 374.6 L530.8 370.3 L527.3 366.9 L526.6 362.2 L526.1 357.9 L527.3 355.4 L524.8 351.4 L527.3 349.5ZM38.6 351.7 L45.6 353.6 L51.4 357.3 L58.4 357.9 L62.6 360.4 L59.6 362.2 L56.1 365.7 L47.9 363.8 L42.1 362.2 L38.6 363.8ZM578.5 344.6 L585.5 346.4 L591.3 346.4 L587.8 340.5 L594.8 334.3 L602.9 331.2 L618.1 327.2 L614.6 326.6 L597.1 329.1 L586.6 334.3 L582.0 339.6ZM678.6 318.8 L690.2 318.8 L701.8 321.0 L690.2 314.2 L678.6 314.2ZM776.3 332.8 L790.3 332.8 L806.5 331.2 L797.2 329.7 L781.0 329.7ZM872.9 344.9 L876.4 343.6 L876.4 345.8ZM38.6 343.6 L44.5 343.6 L38.6 345.8ZM787.9 422.7 L791.4 421.1 L791.0 412.5 L793.8 413.4 L790.3 405.6 L791.0 399.4 L789.1 397.0 L787.2 402.5 L787.7 408.7 L787.9 416.5ZM569.2 315.7 L585.5 317.3 L601.8 315.7 L590.1 313.3ZM503.1 396.7 L504.0 395.1 L507.1 394.2 L510.6 396.7Z" fill="#d2e4f9"/>
<path d="M571.5 421.8 L569.2 421.1 L567.1 417.1 L565.7 414.9 L568.0 409.1 L570.4 408.4 L575.0 405.6 L579.7 405.6 L586.6 408.4 L592.5 406.9 L598.3 405.0 L599.4 401.0 L600.6 397.9 L609.9 396.0 L616.9 395.1 L622.7 394.8 L628.5 397.9 L634.8 397.0 L638.5 400.1 L643.2 407.8 L647.2 407.5 L653.0 407.5 L658.8 410.9 L660.6 413.1 L656.5 416.5 L656.5 419.6 L650.6 419.0 L649.0 424.2 L643.7 425.8 L644.1 434.5 L636.7 432.3 L629.7 431.4 L622.7 434.2 L618.1 437.0 L612.2 435.7 L611.1 432.0 L607.6 429.8 L601.8 430.4 L593.6 424.2 L587.8 425.8 L587.8 437.3 L585.5 437.3 L580.8 434.8 L579.7 435.7 L580.4 432.6 L576.9 431.4 L574.5 427.7 L577.3 424.9 L580.8 424.9 L581.3 420.5 L576.6 419.6Z" fill="#e9f2fd"/>
<path d="M579.7 435.7 L580.8 434.8 L585.5 437.3 L587.8 437.3 L592.0 434.5 L594.8 434.2 L597.4 437.3 L601.5 438.2 L606.4 443.5 L612.5 448.1 L612.2 449.7 L607.6 452.8 L602.9 455.9 L599.0 451.8 L595.5 449.0 L590.1 446.9 L586.6 447.5 L582.9 449.7 L582.7 444.7 L581.1 442.8 L582.0 440.4 L580.4 438.5Z" fill="#e9f2fd"/>
<path d="M587.8 437.3 L587.8 425.8 L593.6 424.2 L601.8 430.4 L607.6 429.8 L611.1 432.0 L612.2 435.7 L618.1 437.0 L622.7 434.2 L627.4 438.8 L624.3 440.7 L621.6 438.5 L619.2 440.7 L616.9 443.8 L614.6 449.4 L612.5 448.1 L606.4 443.5 L601.5 438.2 L597.4 437.3 L594.8 434.2 L592.0 434.5Z" fill="#e9f2fd"/>
<path d="M622.7 434.2 L629.7 431.4 L636.7 432.3 L644.1 434.5 L642.5 438.5 L635.5 440.4 L631.8 445.9 L632.0 449.7 L623.9 451.2 L620.4 449.0 L616.9 450.3 L614.6 449.4 L616.9 443.8 L619.2 440.7 L621.6 438.5 L624.3 440.7 L627.4 438.8Z" fill="#e9f2fd"/>
<path d="M599.2 474.2 L601.1 468.0 L599.0 458.7 L599.9 454.9 L602.9 455.9 L607.6 452.8 L612.2 449.7 L614.6 449.4 L616.9 450.3 L620.4 449.0 L623.9 451.2 L630.9 450.6 L623.9 453.7 L622.7 459.0 L619.2 461.4 L619.2 467.6 L614.6 467.6 L611.8 472.6 L605.3 473.8Z" fill="#e9f2fd"/>
<path d="M601.1 487.5 L612.2 486.6 L614.6 490.9 L616.2 491.8 L617.6 490.0 L622.7 489.3 L620.4 483.1 L625.0 478.5 L630.9 469.2 L632.7 465.2 L629.7 459.9 L637.8 455.2 L630.9 450.6 L623.9 453.7 L622.7 459.0 L619.2 461.4 L619.2 467.6 L614.6 467.6 L611.8 472.6 L605.3 473.8 L599.2 474.2 L601.8 478.5 L604.6 482.5Z" fill="#e6f0fc"/>
<path d="M560.6 443.2 L561.7 442.2 L564.5 444.7 L569.2 445.0 L571.3 448.1 L575.0 450.6 L582.9 449.7 L586.6 447.5 L590.1 446.9 L595.5 449.0 L599.0 451.8 L599.9 454.9 L599.0 458.7 L601.1 468.0 L599.2 474.2 L601.8 478.5 L604.6 482.5 L601.1 487.5 L596.0 486.6 L590.8 485.3 L588.5 481.0 L583.2 482.8 L577.3 478.8 L575.0 473.8 L570.6 472.3 L568.5 469.2 L568.0 463.0 L563.4 459.9 L563.4 454.0 L560.6 450.3Z" fill="#c6dcf7"/>
<path d="M560.6 450.3 L563.4 454.0 L563.4 459.9 L568.0 463.0 L568.5 469.2 L570.6 472.3 L568.0 473.8 L565.7 475.1 L561.5 474.8 L555.2 468.9 L548.7 465.5 L547.8 461.8 L552.9 458.7 L553.6 452.1 L556.4 450.3Z" fill="#e9f2fd"/>
<path d="M541.0 456.2 L541.7 451.8 L545.9 451.2 L550.6 450.9 L556.4 450.3 L553.6 452.1 L552.9 458.7 L547.8 461.8 L541.3 465.2 L540.8 462.1 L542.7 459.3Z" fill="#e9f2fd"/>
<path d="M537.1 468.3 L538.7 473.8 L541.3 474.8 L544.8 472.3 L545.9 467.6 L548.7 465.5 L547.8 461.8 L541.3 465.2 L540.8 462.1 L542.7 459.3 L541.0 456.2 L540.1 459.9 L538.7 464.5Z" fill="#dce9fa"/>
<path d="M518.5 441.3 L521.5 440.1 L525.0 438.5 L525.0 437.6 L529.6 437.9 L535.5 435.1 L539.4 435.1 L547.1 438.5 L554.1 436.6 L558.7 437.9 L561.7 442.2 L560.6 443.2 L560.6 450.3 L556.4 450.3 L550.6 450.9 L545.9 451.2 L542.7 452.8 L541.3 454.0 L540.8 451.2 L537.8 451.2 L533.1 453.4 L528.5 452.8 L525.0 451.5 L521.5 450.6 L518.9 446.6 L519.9 442.8ZM518.0 438.8 L519.4 436.3 L522.7 435.1 L525.0 437.6 L520.3 439.7Z" fill="#c8ddf7"/>
<path d="M532.7 456.5 L535.5 455.6 L538.0 454.6 L536.6 457.0 L533.6 457.9Z" fill="#dce9fa"/>
<path d="M550.6 430.4 L558.7 432.9 L562.2 433.5 L565.7 435.4 L570.4 435.7 L572.7 439.7 L571.5 444.4 L569.2 445.0 L564.5 444.7 L561.7 442.2 L558.7 437.9 L554.1 436.6Z" fill="#f4f8fe"/>
<path d="M538.7 473.8 L541.3 474.8 L544.8 472.3 L545.9 467.6 L548.7 465.5 L555.2 468.9 L561.5 474.8 L565.7 475.1 L568.0 473.8 L570.1 476.9 L572.7 481.6 L574.3 484.7 L577.3 485.3 L577.6 490.0 L583.2 490.3 L587.8 486.2 L588.5 483.8 L588.7 488.4 L592.0 491.5 L596.7 495.5 L593.6 501.7 L592.0 506.4 L587.8 509.8 L585.5 512.6 L579.0 516.9 L571.5 521.6 L563.4 525.0 L558.7 525.9 L557.1 519.4 L556.9 514.1 L554.1 508.9 L550.6 503.3 L548.3 498.6 L547.1 492.4 L544.1 487.8 L541.3 482.2 L538.9 478.5Z" fill="#e6f0fc"/>
<path d="M644.1 434.5 L643.7 425.8 L649.0 424.2 L650.6 419.0 L656.5 419.6 L656.5 416.5 L660.6 413.1 L661.8 413.1 L662.3 414.6 L668.1 417.1 L669.3 421.1 L668.1 425.2 L675.1 426.1 L679.7 428.3 L682.1 432.9 L690.2 433.2 L700.7 435.7 L706.5 433.9 L714.6 433.2 L717.7 429.8 L717.0 425.8 L723.9 424.6 L728.6 421.1 L735.6 419.6 L732.1 416.5 L727.4 417.1 L729.1 410.8 L730.9 411.2 L735.6 404.1 L738.6 400.4 L743.7 399.4 L749.5 401.0 L754.2 410.9 L761.6 413.7 L765.8 417.1 L770.5 415.6 L767.0 425.5 L762.3 425.8 L762.8 430.4 L761.2 433.2 L758.8 433.9 L755.4 435.1 L751.9 436.6 L746.7 441.6 L742.6 439.7 L740.2 444.4 L739.1 438.8 L735.6 441.9 L732.1 443.8 L730.9 445.9 L733.9 449.7 L737.9 448.1 L742.6 449.4 L737.9 453.7 L735.1 456.8 L737.9 461.4 L740.9 467.0 L741.2 469.8 L740.2 473.8 L737.9 480.0 L735.6 485.3 L733.2 489.0 L728.6 494.0 L723.9 496.2 L719.3 497.7 L714.6 499.3 L713.5 502.4 L712.3 498.6 L710.0 498.3 L706.5 495.5 L705.3 494.3 L703.0 493.4 L697.2 495.2 L694.2 495.9 L693.0 498.6 L688.3 496.2 L689.0 492.4 L686.7 490.3 L684.4 489.3 L685.5 481.6 L684.1 477.6 L679.7 475.4 L673.9 478.5 L670.4 478.8 L664.6 478.5 L662.3 479.1 L657.6 478.5 L650.6 474.8 L646.0 471.7 L641.1 468.3 L639.7 464.2 L642.5 462.4 L639.0 455.2 L637.8 455.2 L633.2 452.1 L631.8 450.0 L628.8 444.7 L629.5 442.2 L632.0 439.7 L635.5 440.4 L642.5 438.5ZM710.2 505.8 L714.6 503.0 L715.8 504.5 L713.5 508.6 L710.4 507.9Z" fill="#c1daf7"/>
<path d="M740.2 486.9 L741.4 488.4 L738.8 497.1 L737.0 494.0 L737.9 489.3Z" fill="#a9cbf3"/>
<path d="M661.8 413.1 L666.9 408.7 L672.7 407.8 L678.6 410.3 L686.0 409.1 L685.1 407.2 L686.7 404.1 L696.0 406.3 L704.2 409.4 L708.8 411.5 L715.1 412.8 L723.5 409.4 L729.1 410.8 L727.4 417.1 L732.1 416.5 L735.6 419.6 L728.6 421.1 L723.9 424.6 L717.0 425.8 L717.7 429.8 L714.6 433.2 L706.5 433.9 L700.7 435.7 L690.2 433.2 L682.1 432.9 L679.7 428.3 L675.1 426.1 L668.1 425.2 L669.3 421.1 L668.1 417.1 L662.3 414.6Z" fill="#e9f2fd"/>
<path d="M746.7 441.6 L751.9 436.6 L755.4 435.1 L758.8 433.9 L761.2 433.2 L761.6 434.2 L759.3 438.2 L755.4 441.3 L754.2 442.8 L756.3 445.6 L751.4 448.1 L749.5 448.4 L748.4 445.9 L748.8 442.8Z" fill="#ffffff"/>
<path d="M751.4 448.1 L756.3 445.6 L758.8 453.7 L757.7 456.5 L751.9 458.7 L751.4 455.2 L752.3 450.6Z" fill="#a6c9f3"/>
<path d="M762.1 459.9 L765.8 455.2 L772.8 454.9 L775.8 449.7 L779.8 449.0 L783.3 442.8 L783.3 438.8 L786.8 437.0 L787.9 442.8 L785.6 446.9 L785.4 450.9 L784.4 455.9 L781.0 457.7 L776.3 458.0 L773.3 461.4 L771.6 458.0 L767.0 458.7 L763.5 459.9ZM783.3 435.1 L786.8 433.2 L791.4 435.1 L796.1 431.1 L793.8 428.9 L787.9 424.2 L786.8 429.5 L784.0 431.1ZM759.5 462.1 L762.1 459.9 L764.7 463.0 L763.0 468.3 L760.5 468.6 L759.3 464.2ZM765.8 460.2 L770.7 459.3 L770.0 462.4 L767.0 463.6Z" fill="#8fbaf0"/>
<path d="M616.2 491.8 L618.1 496.2 L621.6 500.8 L626.2 500.2 L626.9 506.4 L628.5 515.7 L630.9 523.4 L633.2 529.6 L635.5 537.4 L637.8 540.2 L639.5 537.4 L642.0 533.4 L643.7 526.5 L644.1 517.2 L648.3 514.1 L653.0 508.9 L658.8 503.3 L659.9 498.6 L663.4 497.7 L664.6 497.1 L663.4 492.4 L663.4 484.7 L666.7 483.8 L671.6 487.5 L670.4 490.9 L672.3 491.8 L673.2 497.1 L675.1 490.9 L677.4 486.2 L679.0 481.6 L684.1 477.6 L679.7 475.4 L673.9 478.5 L671.6 480.0 L666.5 482.5 L664.1 480.7 L662.3 483.5 L657.6 482.8 L653.0 480.4 L646.0 476.3 L643.9 476.0 L646.0 471.7 L641.1 468.3 L639.7 464.2 L642.5 462.4 L639.0 455.2 L637.8 455.2 L629.7 459.9 L632.7 465.2 L630.9 469.2 L625.0 478.5 L620.4 483.1 L622.7 489.3 L617.6 490.0Z" fill="#8ab7ef"/>
<path d="M629.7 450.6 L633.2 451.2 L637.8 455.2 L640.2 458.3 L639.7 464.2 L632.7 465.2 L629.7 459.9 L626.2 455.2Z" fill="#ffffff"/>
<path d="M643.2 534.9 L646.5 538.6 L647.8 543.6 L644.8 547.0 L643.2 543.6Z" fill="#dce9fa"/>
<path d="M643.9 476.0 L646.0 471.7 L650.6 474.8 L657.6 478.5 L662.3 479.1 L662.3 483.5 L657.6 482.8 L653.0 480.4 L646.0 476.3ZM664.1 480.7 L666.5 482.5 L671.6 480.0 L670.4 478.8 L664.6 478.5Z" fill="#e9f2fd"/>
<path d="M664.6 497.1 L668.1 497.1 L671.1 496.2 L672.3 500.2 L673.2 497.1 L672.3 491.8 L670.4 490.9 L671.6 487.5 L666.7 483.8 L663.4 484.7 L663.4 492.4Z" fill="#bcd6f6"/>
<path d="M672.3 500.2 L673.9 504.8 L677.4 512.6 L677.4 515.7 L680.9 513.2 L684.4 514.1 L685.1 518.8 L686.2 525.0 L686.9 534.3 L688.3 526.5 L686.7 520.3 L687.4 514.1 L685.1 510.4 L685.5 504.8 L690.4 502.2 L693.0 498.6 L688.3 496.2 L689.0 492.4 L686.7 490.3 L684.4 489.3 L685.5 481.6 L684.1 477.6 L679.0 481.6 L677.4 486.2 L675.1 490.9 L673.2 497.1Z" fill="#e9f2fd"/>
<path d="M686.9 534.3 L686.2 539.9 L689.0 543.9 L690.9 549.8 L692.5 556.0 L696.0 559.1 L698.3 561.3 L700.2 560.6 L698.1 554.4 L698.3 549.8 L695.3 546.1 L693.7 544.2 L691.4 542.0 L689.0 536.8 L688.3 532.8 L689.0 528.1 L690.2 524.1 L692.5 525.9 L696.0 528.1 L698.3 532.8 L700.7 533.1 L701.8 538.6 L705.3 535.8 L707.7 532.8 L711.6 529.6 L711.8 523.4 L710.7 517.9 L707.7 514.1 L704.2 508.9 L703.2 506.4 L705.3 502.4 L707.7 499.3 L710.0 498.3 L706.5 495.5 L705.3 494.3 L703.0 493.4 L697.2 495.2 L694.2 495.9 L693.0 498.6 L690.4 502.2 L685.5 504.8 L685.1 510.4 L687.4 514.1 L686.7 520.3 L688.3 526.5Z" fill="#d6e6f9"/>
<path d="M679.3 547.9 L684.4 549.2 L690.2 557.5 L698.3 566.8 L700.7 573.0 L704.2 575.5 L703.7 583.3 L700.7 583.6 L695.6 577.7 L691.4 569.9 L687.4 560.6 L683.2 554.4 L679.0 549.8ZM702.3 586.4 L705.3 583.9 L710.0 585.1 L715.8 585.1 L719.8 586.7 L723.9 589.5 L723.7 592.3 L717.0 591.0 L708.8 589.5 L704.2 587.9ZM711.1 560.6 L712.5 558.8 L717.0 557.5 L720.5 555.4 L723.9 551.3 L726.3 548.9 L729.8 543.6 L735.1 548.9 L732.1 551.3 L730.9 555.1 L732.1 562.2 L730.5 566.8 L728.6 573.0 L727.4 577.4 L723.9 577.7 L720.5 575.2 L717.0 574.6 L713.9 574.3 L713.5 569.9 L711.1 565.3ZM735.6 582.3 L737.7 582.3 L737.9 574.6 L740.2 579.2 L742.6 580.2 L741.4 574.6 L740.2 569.9 L744.9 568.4 L737.9 566.8 L736.7 562.8 L747.2 561.3 L748.4 560.0 L738.6 561.6 L736.3 565.3 L733.9 574.0ZM762.3 569.9 L769.3 568.1 L772.8 575.5 L777.5 569.9 L785.6 573.4 L785.6 593.5 L781.0 590.4 L778.6 591.0 L778.2 581.7 L772.8 579.2 L767.0 577.7 L764.7 574.0 L767.0 573.0 L763.5 568.4ZM725.1 591.6 L734.4 590.7 L743.7 591.0 L748.4 591.0 L753.0 591.3 L748.4 594.8 L744.9 597.2 L736.7 593.2 L727.4 593.2ZM754.2 560.6 L756.5 562.2 L755.4 566.8 L754.2 565.3ZM755.4 574.6 L761.2 574.6 L761.2 577.1 L755.4 576.8Z" fill="#e6f0fc"/>
<path d="M712.5 558.8 L717.0 557.5 L720.5 555.4 L723.9 551.3 L726.3 548.9 L729.8 543.6 L735.1 548.9 L732.1 551.3 L730.9 552.3 L726.3 552.9 L723.9 560.6 L718.1 561.6 L712.5 561.3Z" fill="#dbe9fa"/>
<path d="M785.6 573.4 L793.8 577.1 L797.2 582.3 L800.7 584.8 L801.9 590.1 L806.5 597.2 L801.9 597.2 L797.2 591.6 L792.6 589.5 L790.3 593.2 L785.6 593.5ZM806.5 582.3 L811.2 578.3 L810.0 582.3 L807.7 583.9Z" fill="#e6f0fc"/>
<path d="M736.7 515.7 L737.9 507.9 L741.9 507.9 L742.6 512.6 L741.4 518.8 L746.0 523.4 L743.7 525.0 L740.2 522.5 L738.1 521.0ZM741.4 543.6 L744.9 538.9 L749.5 535.8 L751.9 542.0 L749.5 546.7 L746.0 545.1ZM742.6 532.8 L746.0 530.3 L749.5 529.6 L748.4 534.3 L743.7 535.8ZM732.1 537.4 L735.6 532.8 L736.3 534.3 L732.8 538.9Z" fill="#dce9fa"/>
<path d="M721.6 633.5 L722.8 645.9 L725.1 658.3 L726.7 669.1 L728.6 673.8 L732.1 673.8 L740.2 670.1 L746.0 667.3 L750.7 665.4 L757.7 663.3 L763.5 662.9 L769.3 666.0 L773.3 673.2 L777.5 667.6 L778.2 673.8 L775.1 676.3 L778.6 675.7 L782.1 679.4 L785.1 683.1 L790.3 685.6 L794.4 683.1 L797.9 686.5 L801.9 682.5 L806.5 681.5 L808.4 672.2 L810.0 667.6 L813.5 661.4 L814.9 653.6 L813.5 644.3 L810.0 639.7 L806.5 635.0 L803.1 628.8 L797.9 624.2 L796.1 611.8 L791.4 607.8 L789.1 598.5 L786.8 605.6 L786.8 614.9 L784.4 619.5 L781.0 618.0 L774.0 613.3 L772.8 610.2 L775.8 603.1 L768.2 600.9 L762.3 603.1 L758.8 611.5 L755.4 611.2 L751.9 608.7 L747.2 615.8 L742.6 619.5 L740.2 625.8 L734.4 627.3 L728.6 629.5 L723.9 632.9ZM794.0 691.5 L802.6 692.1 L801.9 698.6 L799.1 700.5 L796.1 697.0Z" fill="#b9d5f6"/>
<path d="M859.1 671.9 L863.6 676.3 L867.1 681.5 L872.9 682.2 L870.5 686.8 L868.2 690.8 L865.4 694.3 L863.8 693.0 L865.2 689.3 L861.9 687.1 L863.8 683.1 L861.2 675.3ZM859.4 690.8 L863.1 694.6 L860.8 698.6 L858.9 701.1 L855.9 703.2 L854.3 707.6 L850.8 709.8 L844.9 707.9 L846.1 705.4 L849.6 701.7 L854.3 698.6 L856.6 694.9Z" fill="#d6e6f9"/>
<path d="M246.1 566.1 L247.7 566.1 L247.7 567.6 L246.1 567.6ZM244.2 567.0 L245.9 567.0 L245.9 568.6 L244.2 568.6ZM391.5 445.2 L393.2 445.2 L393.2 446.7 L391.5 446.7ZM397.3 447.3 L399.0 447.3 L399.0 448.9 L397.3 448.9ZM420.6 477.4 L422.2 477.4 L422.2 479.0 L420.6 479.0ZM417.1 476.8 L418.8 476.8 L418.8 478.3 L417.1 478.3ZM424.6 474.9 L426.2 474.9 L426.2 476.5 L424.6 476.5ZM400.8 514.9 L402.5 514.9 L402.5 516.5 L400.8 516.5ZM402.0 517.7 L403.6 517.7 L403.6 519.3 L402.0 519.3ZM585.8 578.8 L587.5 578.8 L587.5 580.3 L585.8 580.3ZM590.5 627.5 L592.1 627.5 L592.1 629.0 L590.5 629.0ZM585.8 629.9 L587.5 629.9 L587.5 631.5 L585.8 631.5ZM56.4 607.3 L58.1 607.3 L58.1 608.9 L56.4 608.9ZM49.5 629.6 L51.1 629.6 L51.1 631.2 L49.5 631.2ZM108.8 619.1 L110.4 619.1 L110.4 620.6 L108.8 620.6ZM84.8 630.2 L86.5 630.2 L86.5 631.8 L84.8 631.8ZM847.6 654.4 L849.3 654.4 L849.3 656.0 L847.6 656.0ZM46.0 700.9 L47.6 700.9 L47.6 702.5 L46.0 702.5ZM627.7 552.1 L629.3 552.1 L629.3 553.7 L627.7 553.7ZM672.4 527.3 L674.0 527.3 L674.0 528.9 L672.4 528.9ZM673.1 541.3 L674.7 541.3 L674.7 542.8 L673.1 542.8ZM270.5 668.7 L272.2 668.7 L272.2 670.2 L270.5 670.2ZM795.7 517.4 L797.4 517.4 L797.4 519.0 L795.7 519.0ZM793.6 523.0 L795.3 523.0 L795.3 524.5 L793.6 524.5ZM769.7 541.3 L771.3 541.3 L771.3 542.8 L769.7 542.8ZM824.8 543.1 L826.4 543.1 L826.4 544.7 L824.8 544.7ZM854.6 542.5 L856.2 542.5 L856.2 544.1 L854.6 544.1ZM859.3 560.2 L860.9 560.2 L860.9 561.7 L859.3 561.7ZM873.2 590.9 L874.8 590.9 L874.8 592.4 L873.2 592.4ZM443.4 613.8 L445.1 613.8 L445.1 615.4 L443.4 615.4ZM423.2 589.0 L424.8 589.0 L424.8 590.6 L423.2 590.6ZM202.1 648.5 L203.7 648.5 L203.7 650.1 L202.1 650.1ZM417.4 463.2 L419.0 463.2 L419.0 464.7 L417.4 464.7ZM313.8 516.8 L315.4 516.8 L315.4 518.3 L313.8 518.3ZM315.0 521.1 L316.6 521.1 L316.6 522.7 L315.0 522.7ZM869.4 619.5 L872.9 618.9 L872.9 622.0 L870.1 621.7ZM841.5 630.4 L846.1 634.4 L844.9 635.0 L839.6 628.2ZM818.2 583.9 L820.5 587.0 L822.8 590.1 L820.5 590.1ZM827.5 591.6 L832.1 594.8 L831.0 596.3ZM844.9 611.8 L847.3 614.9 L846.1 616.4Z" fill="#e9f2fd"/>
</g>
<path d="M429.6 523.4 L425.4 523.4 L418.4 523.4M418.6 527.2 L425.6 526.2 L431.0 526.9M421.4 529.6 L425.6 528.1M426.8 535.8 L430.7 534.3 L433.1 538.9 L430.7 543.9M433.1 538.9 L437.7 542.0 L440.0 551.7M440.0 533.7 L443.5 534.3 L450.5 534.9 L451.0 549.8M450.5 534.9 L456.3 531.2 L457.5 531.2 L458.7 540.5 L460.3 546.4M457.5 531.2 L462.9 531.2 L463.3 527.2M461.7 546.1 L461.2 531.2M444.7 533.1 L447.0 535.8M323.5 658.9 L322.1 666.0 L321.6 670.4M333.2 669.8 L333.7 666.0M331.1 639.7 L322.5 641.9 L313.9 638.1 L311.4 633.5 L312.1 628.8 L315.6 625.8 L322.1 626.7M301.8 635.0 L299.3 630.4 L296.5 624.2 L296.9 619.5 L296.2 613.3 L297.6 604.0 L295.8 599.1M293.9 622.3 L296.5 624.2M285.5 588.5 L282.5 579.2 L276.0 573.0 L270.6 575.8M294.6 578.3 L287.6 573.0 L282.5 565.6 L277.2 562.8 L273.9 560.6M295.1 562.2 L299.3 557.5 L300.4 546.7 L294.6 543.6 L288.8 542.7 L288.8 531.2 L290.7 528.1M316.5 549.2 L317.9 545.1 L318.3 539.6M324.9 559.7 L324.4 546.7M331.8 558.5 L331.4 548.2M250.0 510.1 L249.9 516.0M252.3 516.6 L249.7 520.7 L249.2 522.2M249.7 520.7 L253.2 522.2 L253.9 524.4M263.9 518.8 L258.5 521.9 L255.5 524.1 L253.9 524.4M262.7 531.5 L258.1 531.2M265.3 535.5 L264.6 540.2M506.4 392.6 L519.2 391.1M508.0 386.7 L514.0 386.1 L521.5 386.7M489.1 425.5 L495.9 421.1M492.9 428.0 L501.7 425.8 L502.4 430.4 L502.9 435.7M502.4 430.4 L509.9 433.5M505.2 435.1 L506.4 439.4M690.4 502.2 L694.9 504.8 L700.7 509.5 L703.0 515.7 L703.0 521.3 L696.0 528.1M698.3 532.8 L701.8 531.2 L705.3 529.6 L707.7 520.3 L703.0 521.3M707.7 520.3 L707.7 514.1M692.5 545.1 L693.7 544.2M723.9 551.3 L725.1 550.1" fill="none" stroke="#444a55" stroke-width="0.62"/>
</svg>
<div class="a" style="left:50px;top:576px;font-size:13px;color:#555;line-height:16px">max</div>
<div class="a" style="left:52px;top:602px;width:21px;height:154px;border-radius:2px;background:linear-gradient(#3a85dc,#e9f2fd)"></div>
<div class="a" style="left:93px;top:584px;font-size:14px;color:#222;line-height:17px">243546</div>
<div class="a" style="left:93px;top:750px;font-size:14px;color:#222;line-height:17px">0</div>
<svg class="a" style="left:0;top:0;pointer-events:none" width="1739" height="760" viewBox="0 0 1739 760" font-family="Liberation Sans, sans-serif">
<defs><clipPath id="lgc"><rect x="900" y="280" width="728" height="30"/></clipPath></defs>
<g clip-path="url(#lgc)">
<circle cx="930.9" cy="296.2" r="4.5" fill="#69a4fe"/>
<circle cx="1035.4" cy="296.2" r="4.5" fill="#56cfdd"/>
<circle cx="1087" cy="296.2" r="4.5" fill="#f9a98a"/>
<circle cx="1138.6" cy="296.2" r="4.5" fill="#56cd7e"/>
<circle cx="1190.5" cy="296.2" r="4.5" fill="#f7b35a"/>
<circle cx="1242.2" cy="296.2" r="4.5" fill="#5b88f0"/>
<circle cx="1312.5" cy="296.2" r="4.5" fill="#7ba6f7"/>
<circle cx="1383.3" cy="296.2" r="4.5" fill="#9b86f2"/>
<circle cx="1429.4" cy="296.2" r="4.5" fill="#a8d4fd"/>
<circle cx="1500" cy="296.2" r="4.5" fill="#8ee5b9"/>
<circle cx="1570.5" cy="296.2" r="4.5" fill="#69a4fe"/>
<text x="940.9" y="299.8" font-size="13" fill="#666" textLength="78.4" lengthAdjust="spacingAndGlyphs">临床阶段不明</text>
<text x="1046.9" y="300.6" font-size="15" font-family="Liberation Serif, serif" fill="#666" textLength="11.0" lengthAdjust="spacingAndGlyphs">II</text>
<text x="1058.5" y="299.8" font-size="13" fill="#666" textLength="12.7" lengthAdjust="spacingAndGlyphs">期</text>
<text x="1098.1" y="300.6" font-size="15" font-family="Liberation Serif, serif" fill="#666" textLength="10.4" lengthAdjust="spacingAndGlyphs">III</text>
<text x="1109.1" y="299.8" font-size="13" fill="#666" textLength="13.3" lengthAdjust="spacingAndGlyphs">期</text>
<text x="1152.5" y="300.6" font-size="15" font-family="Liberation Serif, serif" fill="#666" textLength="5.3" lengthAdjust="spacingAndGlyphs">I</text>
<text x="1161.6" y="299.8" font-size="13" fill="#666" textLength="12.7" lengthAdjust="spacingAndGlyphs">期</text>
<text x="1200.8" y="300.6" font-size="15" font-family="Liberation Serif, serif" fill="#666" textLength="12.1" lengthAdjust="spacingAndGlyphs">IV</text>
<text x="1212.9" y="299.8" font-size="13" fill="#666" textLength="13.2" lengthAdjust="spacingAndGlyphs">期</text>
<text x="1255.9" y="300.6" font-size="15" font-family="Liberation Serif, serif" fill="#666" textLength="5.0" lengthAdjust="spacingAndGlyphs">I</text>
<text x="1265.4" y="300.3" font-size="13" fill="#666" textLength="5.0" lengthAdjust="spacingAndGlyphs">/</text>
<text x="1272.3" y="300.6" font-size="15" font-family="Liberation Serif, serif" fill="#666" textLength="10.8" lengthAdjust="spacingAndGlyphs">II</text>
<text x="1283.7" y="299.8" font-size="13" fill="#666" textLength="12.6" lengthAdjust="spacingAndGlyphs">期</text>
<text x="1324.2" y="300.6" font-size="15" font-family="Liberation Serif, serif" fill="#666" textLength="10.7" lengthAdjust="spacingAndGlyphs">II</text>
<text x="1336" y="300.3" font-size="13" fill="#666" textLength="5.0" lengthAdjust="spacingAndGlyphs">/</text>
<text x="1342.5" y="300.6" font-size="15" font-family="Liberation Serif, serif" fill="#666" textLength="10.8" lengthAdjust="spacingAndGlyphs">III</text>
<text x="1353.9" y="299.8" font-size="13" fill="#666" textLength="13.3" lengthAdjust="spacingAndGlyphs">期</text>
<text x="1393.8" y="300.3" font-size="13" fill="#666" textLength="5.7" lengthAdjust="spacingAndGlyphs">0</text>
<text x="1400.1" y="299.8" font-size="13" fill="#666" textLength="13.3" lengthAdjust="spacingAndGlyphs">期</text>
<text x="1440.6" y="300.6" font-size="15" font-family="Liberation Serif, serif" fill="#666" textLength="10.7" lengthAdjust="spacingAndGlyphs">III</text>
<text x="1452" y="300.3" font-size="13" fill="#666" textLength="5.0" lengthAdjust="spacingAndGlyphs">/</text>
<text x="1458.3" y="300.6" font-size="15" font-family="Liberation Serif, serif" fill="#666" textLength="12.6" lengthAdjust="spacingAndGlyphs">IV</text>
<text x="1470.9" y="299.8" font-size="13" fill="#666" textLength="13.3" lengthAdjust="spacingAndGlyphs">期</text>
<text x="1513.9" y="300.6" font-size="15" font-family="Liberation Serif, serif" fill="#666" textLength="5.1" lengthAdjust="spacingAndGlyphs">I</text>
<text x="1522.8" y="300.3" font-size="13" fill="#666" textLength="5.7" lengthAdjust="spacingAndGlyphs">/</text>
<text x="1529.8" y="300.6" font-size="15" font-family="Liberation Serif, serif" fill="#666" textLength="11.3" lengthAdjust="spacingAndGlyphs">III</text>
<text x="1541.1" y="299.8" font-size="13" fill="#666" textLength="13.3" lengthAdjust="spacingAndGlyphs">期</text>
<text x="1584.1" y="300.6" font-size="15" font-family="Liberation Serif, serif" fill="#666" textLength="5.1" lengthAdjust="spacingAndGlyphs">I</text>
<text x="1593.6" y="300.3" font-size="13" fill="#666" textLength="5.7" lengthAdjust="spacingAndGlyphs">/</text>
<text x="1601" y="300.6" font-size="15" font-family="Liberation Serif, serif" fill="#666" textLength="9.0" lengthAdjust="spacingAndGlyphs">II</text>
<text x="1612" y="300.3" font-size="13" fill="#666" textLength="5.7" lengthAdjust="spacingAndGlyphs">/</text>
<text x="1619" y="300.6" font-size="15" font-family="Liberation Serif, serif" fill="#666" textLength="11.0" lengthAdjust="spacingAndGlyphs">II</text>
</g>
<path d="M1638 296l8.5-6.5v13z" fill="#aaa"/>
<path d="M1709 296l-8.5-6.5v13z" fill="#5b8ff9"/>
<text x="1663.5" y="301" font-size="14" fill="#333">1/2</text>
<text x="981" y="331" font-size="13" fill="#666">试验数量（个）</text>
<text x="1631" y="331" font-size="13" fill="#666" text-anchor="end">增长率（%）</text>
<path d="M981.9 350.5H1600.3" stroke="#e3e6f3" stroke-width="1" stroke-dasharray="5,5"/>
<text x="971.5" y="354.6000000000001" font-size="13" fill="#666" text-anchor="end">73,833</text>
<path d="M981.9 369.5H1600.3" stroke="#e3e6f3" stroke-width="1" stroke-dasharray="5,5"/>
<text x="971.5" y="373.8083485704225" font-size="13" fill="#666" text-anchor="end">70,000</text>
<path d="M981.9 419.5H1600.3" stroke="#e3e6f3" stroke-width="1" stroke-dasharray="5,5"/>
<text x="971.5" y="423.9214416317907" font-size="13" fill="#666" text-anchor="end">60,000</text>
<path d="M981.9 469.5H1600.3" stroke="#e3e6f3" stroke-width="1" stroke-dasharray="5,5"/>
<text x="971.5" y="474.0345346931589" font-size="13" fill="#666" text-anchor="end">50,000</text>
<path d="M981.9 520.5H1600.3" stroke="#e3e6f3" stroke-width="1" stroke-dasharray="5,5"/>
<text x="971.5" y="524.1476277545272" font-size="13" fill="#666" text-anchor="end">40,000</text>
<path d="M981.9 570.5H1600.3" stroke="#e3e6f3" stroke-width="1" stroke-dasharray="5,5"/>
<text x="971.5" y="574.2607208158953" font-size="13" fill="#666" text-anchor="end">30,000</text>
<path d="M981.9 620.5H1600.3" stroke="#e3e6f3" stroke-width="1" stroke-dasharray="5,5"/>
<text x="971.5" y="624.3738138772636" font-size="13" fill="#666" text-anchor="end">20,000</text>
<path d="M981.9 670.5H1600.3" stroke="#e3e6f3" stroke-width="1" stroke-dasharray="5,5"/>
<text x="971.5" y="674.4869069386318" font-size="13" fill="#666" text-anchor="end">10,000</text>
<text x="971.5" y="724.6" font-size="13" fill="#666" text-anchor="end">0</text>
<path d="M980.9 350V720.0" stroke="#e0e6e6" stroke-width="1.2"/>
<path d="M980.9 720.5H1600.3" stroke="#d6dede" stroke-width="1.2"/>
<path d="M981.5 720.0v5" stroke="#9aa3a3" stroke-width="1"/>
<path d="M1050.5 720.0v5" stroke="#9aa3a3" stroke-width="1"/>
<path d="M1119.5 720.0v5" stroke="#9aa3a3" stroke-width="1"/>
<path d="M1187.5 720.0v5" stroke="#9aa3a3" stroke-width="1"/>
<path d="M1256.5 720.0v5" stroke="#9aa3a3" stroke-width="1"/>
<path d="M1325.5 720.0v5" stroke="#9aa3a3" stroke-width="1"/>
<path d="M1394.5 720.0v5" stroke="#9aa3a3" stroke-width="1"/>
<path d="M1463.5 720.0v5" stroke="#9aa3a3" stroke-width="1"/>
<path d="M1531.5 720.0v5" stroke="#9aa3a3" stroke-width="1"/>
<path d="M1600.5 720.0v5" stroke="#9aa3a3" stroke-width="1"/>
<text x="1015.3111111111111" y="739" font-size="14" fill="#666" text-anchor="middle">2020</text>
<text x="1084.1333333333332" y="739" font-size="14" fill="#666" text-anchor="middle">2021</text>
<text x="1152.9555555555555" y="739" font-size="14" fill="#666" text-anchor="middle">2022</text>
<text x="1221.7777777777778" y="739" font-size="14" fill="#666" text-anchor="middle">2023</text>
<text x="1290.6" y="739" font-size="14" fill="#666" text-anchor="middle">2024</text>
<text x="1359.4222222222222" y="739" font-size="14" fill="#666" text-anchor="middle">2025</text>
<text x="1428.2444444444445" y="739" font-size="14" fill="#666" text-anchor="middle">2026</text>
<text x="1497.0666666666666" y="739" font-size="14" fill="#666" text-anchor="middle">2027</text>
<text x="1565.888888888889" y="739" font-size="14" fill="#666" text-anchor="middle">2028</text>
<text x="1609" y="363.3" font-size="13.8" fill="#666">30%</text>
<text x="1609" y="434.3" font-size="13.8" fill="#666">0%</text>
<text x="1609" y="505.3" font-size="13.8" fill="#666">-30%</text>
<text x="1609" y="577.1999999999999" font-size="13.8" fill="#666">-60%</text>
<text x="1609" y="648.5" font-size="13.8" fill="#666">-90%</text>
<text x="1609" y="718.8" font-size="13.8" fill="#666">-120%</text>
<rect x="998.8" y="584.6" width="33" height="135.4" fill="#69a4fe"/>
<rect x="998.8" y="558.6" width="33" height="26.0" fill="#56cfdd"/>
<rect x="998.8" y="532.6" width="33" height="26.0" fill="#f9a98a"/>
<rect x="998.8" y="520.1" width="33" height="12.5" fill="#56cd7e"/>
<rect x="998.8" y="510.7" width="33" height="9.4" fill="#f7b35a"/>
<rect x="998.8" y="505.0" width="33" height="5.7" fill="#5b88f0"/>
<rect x="998.8" y="502.5" width="33" height="2.5" fill="#7ba6f7"/>
<rect x="998.8" y="500.8" width="33" height="1.7" fill="#a8d4fd"/>
<rect x="998.8" y="499.1" width="33" height="1.7" fill="#9b86f2"/>
<text x="1015.3111111111111" y="490.5" font-size="13.9" fill="#333" text-anchor="middle">44,144</text>
<rect x="1067.6" y="567.4" width="33" height="152.6" fill="#69a4fe"/>
<rect x="1067.6" y="538.7" width="33" height="28.7" fill="#56cfdd"/>
<rect x="1067.6" y="511.0" width="33" height="27.7" fill="#f9a98a"/>
<rect x="1067.6" y="497.0" width="33" height="14.0" fill="#56cd7e"/>
<rect x="1067.6" y="486.8" width="33" height="10.2" fill="#f7b35a"/>
<rect x="1067.6" y="479.7" width="33" height="7.1" fill="#5b88f0"/>
<rect x="1067.6" y="477.8" width="33" height="1.9" fill="#7ba6f7"/>
<rect x="1067.6" y="476.0" width="33" height="1.8" fill="#a8d4fd"/>
<rect x="1067.6" y="473.6" width="33" height="2.4" fill="#9b86f2"/>
<text x="1084.1333333333332" y="465.0" font-size="13.9" fill="#333" text-anchor="middle">49,222</text>
<rect x="1136.5" y="573.5" width="33" height="146.5" fill="#69a4fe"/>
<rect x="1136.5" y="550.0" width="33" height="23.5" fill="#56cfdd"/>
<rect x="1136.5" y="526.7" width="33" height="23.3" fill="#f9a98a"/>
<rect x="1136.5" y="512.7" width="33" height="14.0" fill="#56cd7e"/>
<rect x="1136.5" y="504.0" width="33" height="8.7" fill="#f7b35a"/>
<rect x="1136.5" y="497.8" width="33" height="6.2" fill="#5b88f0"/>
<rect x="1136.5" y="496.0" width="33" height="1.8" fill="#7ba6f7"/>
<rect x="1136.5" y="494.2" width="33" height="1.8" fill="#a8d4fd"/>
<rect x="1136.5" y="492.0" width="33" height="2.2" fill="#9b86f2"/>
<text x="1152.9555555555555" y="483.4" font-size="13.9" fill="#333" text-anchor="middle">45,546</text>
<rect x="1205.3" y="572.6" width="33" height="147.4" fill="#69a4fe"/>
<rect x="1205.3" y="553.0" width="33" height="19.6" fill="#56cfdd"/>
<rect x="1205.3" y="538.9" width="33" height="14.1" fill="#f9a98a"/>
<rect x="1205.3" y="525.6" width="33" height="13.3" fill="#56cd7e"/>
<rect x="1205.3" y="517.9" width="33" height="7.7" fill="#f7b35a"/>
<rect x="1205.3" y="512.4" width="33" height="5.5" fill="#5b88f0"/>
<rect x="1205.3" y="511.0" width="33" height="1.4" fill="#7ba6f7"/>
<rect x="1205.3" y="509.7" width="33" height="1.3" fill="#a8d4fd"/>
<rect x="1205.3" y="507.6" width="33" height="2.1" fill="#9b86f2"/>
<text x="1221.7777777777778" y="499.0" font-size="13.9" fill="#333" text-anchor="middle">42,422</text>
<rect x="1274.1" y="588.3" width="33" height="131.7" fill="#69a4fe"/>
<rect x="1274.1" y="571.5" width="33" height="16.8" fill="#56cfdd"/>
<rect x="1274.1" y="558.9" width="33" height="12.6" fill="#f9a98a"/>
<rect x="1274.1" y="544.5" width="33" height="14.4" fill="#56cd7e"/>
<rect x="1274.1" y="538.3" width="33" height="6.2" fill="#f7b35a"/>
<rect x="1274.1" y="532.7" width="33" height="5.6" fill="#5b88f0"/>
<rect x="1274.1" y="532.0" width="33" height="0.7" fill="#7ba6f7"/>
<rect x="1274.1" y="531.2" width="33" height="0.8" fill="#a8d4fd"/>
<rect x="1274.1" y="528.9" width="33" height="2.3" fill="#9b86f2"/>
<text x="1290.6" y="520.3" font-size="13.9" fill="#333" text-anchor="middle">38,178</text>
<rect x="1342.9" y="653.8" width="33" height="66.2" fill="#69a4fe"/>
<rect x="1342.9" y="643.9" width="33" height="9.9" fill="#56cfdd"/>
<rect x="1342.9" y="636.8" width="33" height="7.1" fill="#f9a98a"/>
<rect x="1342.9" y="628.5" width="33" height="8.3" fill="#56cd7e"/>
<rect x="1342.9" y="625.0" width="33" height="3.5" fill="#f7b35a"/>
<rect x="1342.9" y="622.4" width="33" height="2.6" fill="#5b88f0"/>
<rect x="1342.9" y="622.0" width="33" height="0.4" fill="#7ba6f7"/>
<rect x="1342.9" y="621.4" width="33" height="0.6" fill="#a8d4fd"/>
<rect x="1342.9" y="620.0" width="33" height="1.4" fill="#9b86f2"/>
<text x="1359.4222222222222" y="611.4" font-size="13.9" fill="#333" text-anchor="middle">19,967</text>
<text x="1428.2444444444445" y="711.4" font-size="13.9" fill="#333" text-anchor="middle">23</text>
<text x="1497.0666666666666" y="711.4" font-size="13.9" fill="#333" text-anchor="middle">3</text>
<text x="1565.888888888889" y="711.4" font-size="13.9" fill="#333" text-anchor="middle">1</text>
<path d="M1015.31 424.81 C1015.31 424.81 1051.96 403.18 1084.13 403.18 C1120.78 403.18 1115.51 448.08 1152.96 448.08 C1184.33 448.08 1187.46 446.64 1221.78 446.64 C1256.28 446.64 1264.41 446.64 1290.60 454.07 C1333.23 466.17 1328.90 496.13 1359.42 543.31 C1397.72 602.50 1383.34 666.82 1428.24 666.82 C1452.16 666.82 1464.52 654.82 1497.07 636.23 C1533.34 615.52 1565.89 588.21 1565.89 588.21" fill="none" stroke="#9b86f2" stroke-width="2"/>
<circle cx="1015.31" cy="424.81" r="3" fill="#fff" stroke="#9b86f2" stroke-width="1.6"/>
<text x="1012.31" y="418.01388" font-size="14.6" fill="#666" text-anchor="middle">2.36%</text>
<circle cx="1084.13" cy="403.18" r="3" fill="#fff" stroke="#9b86f2" stroke-width="1.6"/>
<text x="1081.13" y="396.37949999999995" font-size="14.6" fill="#666" text-anchor="middle">11.50%</text>
<circle cx="1152.96" cy="448.08" r="3" fill="#fff" stroke="#9b86f2" stroke-width="1.6"/>
<text x="1149.96" y="441.28148999999996" font-size="14.6" fill="#666" text-anchor="middle">-7.47%</text>
<circle cx="1221.78" cy="446.64" r="3" fill="#fff" stroke="#9b86f2" stroke-width="1.6"/>
<text x="1218.78" y="439.83761999999996" font-size="14.6" fill="#666" text-anchor="middle">-6.86%</text>
<circle cx="1290.60" cy="454.07" r="3" fill="#fff" stroke="#9b86f2" stroke-width="1.6"/>
<text x="1287.60" y="447.27" font-size="14.6" fill="#666" text-anchor="middle">-10%</text>
<circle cx="1359.42" cy="543.31" r="3" fill="#fff" stroke="#9b86f2" stroke-width="1.6"/>
<text x="1356.42" y="536.5059" font-size="14.6" fill="#666" text-anchor="middle">-47.70%</text>
<circle cx="1428.24" cy="666.82" r="3" fill="#fff" stroke="#9b86f2" stroke-width="1.6"/>
<text x="1425.24" y="660.01596" font-size="14.6" fill="#666" text-anchor="middle">-99.88%</text>
<circle cx="1497.07" cy="636.23" r="3" fill="#fff" stroke="#9b86f2" stroke-width="1.6"/>
<text x="1494.07" y="629.4343200000001" font-size="14.6" fill="#666" text-anchor="middle">-86.96%</text>
<circle cx="1565.89" cy="588.21" r="3" fill="#fff" stroke="#9b86f2" stroke-width="1.6"/>
<text x="1562.89" y="581.4078900000001" font-size="14.6" fill="#666" text-anchor="middle">-66.67%</text>
<rect x="981.5" y="753.5" width="619" height="30" rx="3" fill="none" stroke="#d2dbee" stroke-width="1"/>
<rect x="1524" y="754" width="76" height="30" fill="#e7eefb"/>
<circle cx="1524" cy="757" r="3" fill="#fff" stroke="#aab6c8" stroke-width="1"/>
<circle cx="1600" cy="757" r="3" fill="#fff" stroke="#aab6c8" stroke-width="1"/>
</svg>
</body></html>
